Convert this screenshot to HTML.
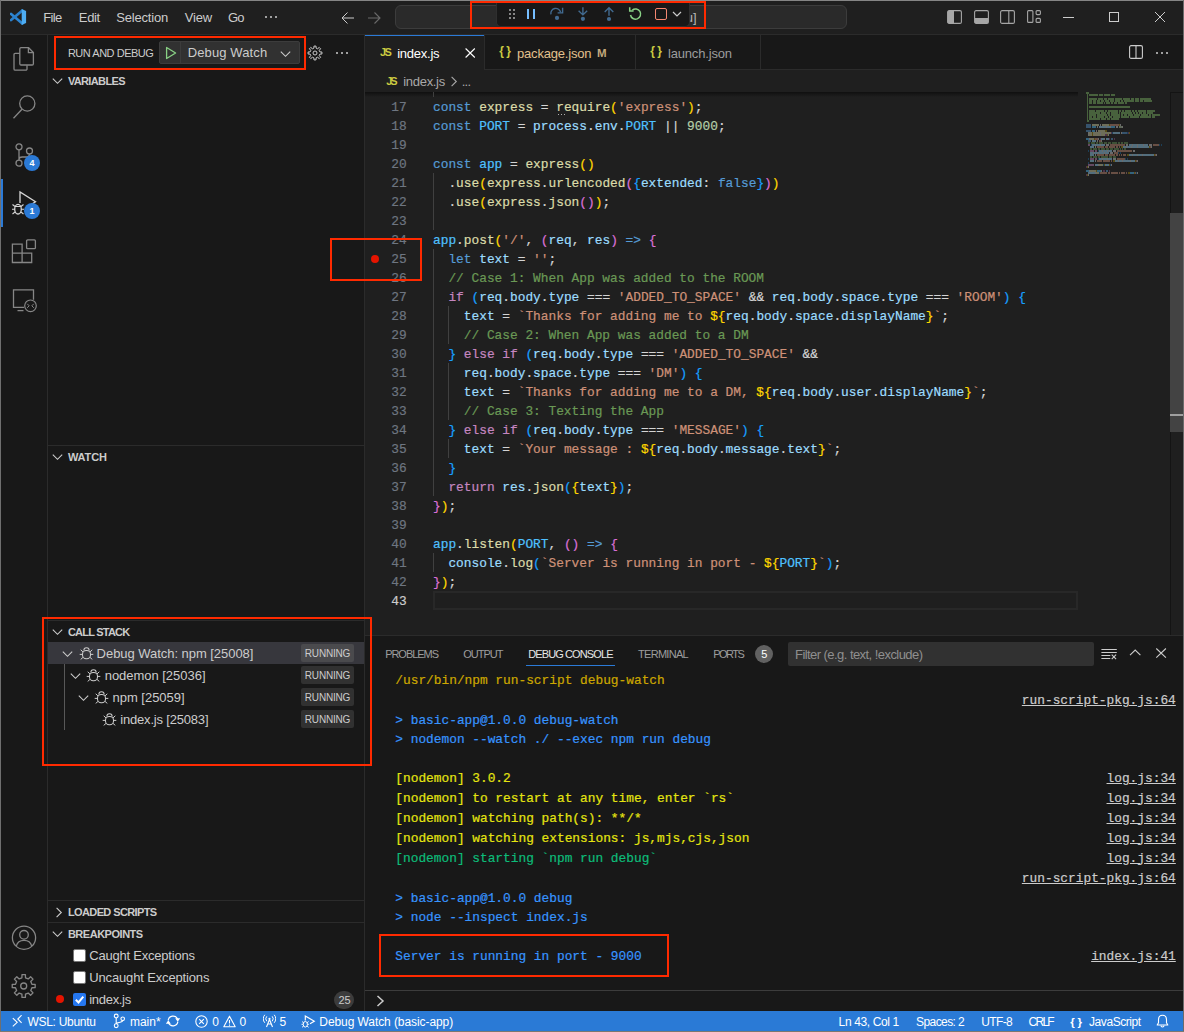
<!DOCTYPE html>
<html><head><meta charset="utf-8"><title>VS Code Debug</title><style>
html,body{margin:0;padding:0;background:#181818;}
#root{position:relative;width:1184px;height:1032px;overflow:hidden;background:#181818;}
.r{position:absolute;display:block}
.t{position:absolute;white-space:pre;display:block}
.s{font-family:"Liberation Sans",sans-serif}
.m{font-family:"Liberation Mono",monospace;-webkit-text-stroke:0.2px currentColor}
</style></head><body><div id="root">
<div class="r" style="left:0px;top:0px;width:1184px;height:1032px;background:#181818;"></div>
<div class="r" style="left:1px;top:1px;width:1182px;height:33px;background:#1f1f1f;"></div>
<div class="r" style="left:1px;top:34px;width:1182px;height:1px;background:#2b2b2b;"></div>
<div class="r" style="left:47px;top:35px;width:1px;height:976px;background:#2b2b2b;"></div>
<div class="r" style="left:364px;top:35px;width:1px;height:976px;background:#2b2b2b;"></div>
<div class="r" style="left:365px;top:70px;width:818px;height:565px;background:#1f1f1f;"></div>
<div class="r" style="left:365px;top:635px;width:818px;height:1px;background:#2b2b2b;"></div>
<div class="r" style="left:1px;top:1011px;width:1182px;height:20px;background:#2a7ad6;"></div>
<svg class="r" style="left:10px;top:9px;" width="17" height="16" viewBox="0 0 17 16" fill="none"><path d="M1.100 4.900 12.300 14.400" stroke="#2d86d3" stroke-width="2.600" stroke-linecap="round"/><path d="M1.100 11.100 12.300 1.600" stroke="#2a7fca" stroke-width="2.600" stroke-linecap="round"/><path d="M11.700 0 16.100 2v12l-4.400 2z" fill="#4dadf3"/></svg>
<span class="t s" style="left:43.3px;top:8.5px;line-height:18px;font-size:13px;color:#cccccc;letter-spacing:-0.682px;">File</span>
<span class="t s" style="left:78.8px;top:8.5px;line-height:18px;font-size:13px;color:#cccccc;letter-spacing:-0.334px;">Edit</span>
<span class="t s" style="left:116.3px;top:8.5px;line-height:18px;font-size:13px;color:#cccccc;letter-spacing:-0.197px;">Selection</span>
<span class="t s" style="left:184.7px;top:8.5px;line-height:18px;font-size:13px;color:#cccccc;letter-spacing:-0.148px;">View</span>
<span class="t s" style="left:228.0px;top:8.5px;line-height:18px;font-size:13px;color:#cccccc;letter-spacing:-0.842px;">Go</span>
<div class="r" style="left:265px;top:16px;width:2px;height:2px;background:#cccccc;border-radius:1px"></div>
<div class="r" style="left:270px;top:16px;width:2px;height:2px;background:#cccccc;border-radius:1px"></div>
<div class="r" style="left:275px;top:16px;width:2px;height:2px;background:#cccccc;border-radius:1px"></div>
<svg class="r" style="left:341px;top:10.5px;" width="14" height="14" viewBox="0 0 14 14" fill="none"><path d="M13 7H1.5M6.5 1.5 1 7l5.5 5.5" stroke="#cccccc" stroke-width="1"/></svg>
<svg class="r" style="left:367px;top:10.5px;" width="14" height="14" viewBox="0 0 14 14" fill="none"><path d="M1 7h11.5M7.5 1.5 13 7l-5.5 5.5" stroke="#6a6a6a" stroke-width="1.1"/></svg>
<div class="r" style="left:395px;top:5px;width:452px;height:24px;background:#2a2a2a;border:1px solid #3c3c3c;border-radius:6px;box-sizing:border-box"></div>
<span class="t s" style="left:685.8px;top:8.5px;line-height:18px;font-size:13px;color:#b8b8b8;">u]</span>
<div class="r" style="left:496px;top:1px;width:193.5px;height:26px;background:#181818;border-radius:0 0 5px 5px;border:1px solid #2f2f2f;border-top:none;box-sizing:border-box"></div>
<div class="r" style="left:508.7px;top:9px;width:2.6px;height:2px;background:#858585;"></div>
<div class="r" style="left:512.9px;top:9px;width:2.6px;height:2px;background:#858585;"></div>
<div class="r" style="left:508.7px;top:13px;width:2.6px;height:2px;background:#858585;"></div>
<div class="r" style="left:512.9px;top:13px;width:2.6px;height:2px;background:#858585;"></div>
<div class="r" style="left:508.7px;top:17px;width:2.6px;height:2px;background:#858585;"></div>
<div class="r" style="left:512.9px;top:17px;width:2.6px;height:2px;background:#858585;"></div>
<div class="r" style="left:527px;top:8.5px;width:2.4px;height:10.7px;background:#75beff;"></div>
<div class="r" style="left:533px;top:8.5px;width:2.4px;height:10.7px;background:#75beff;"></div>
<svg class="r" style="left:548px;top:5px;" width="18" height="18" viewBox="0 0 18 18" fill="none"><path d="M2.900 9.300A4.900 4.900 0 0 1 12.600 7.400" stroke="#426b91" stroke-width="1.400"/><path d="M14.600 2.700v5.200H9.600" stroke="#426b91" stroke-width="1.400"/><circle cx="9" cy="12.900" r="2.100" fill="#426b91"/></svg>
<svg class="r" style="left:574px;top:5px;" width="18" height="18" viewBox="0 0 18 18" fill="none"><path d="M8.900 2.200v7.400M4.600 5.800 8.900 9.900l4.300-4.100" stroke="#426b91" stroke-width="1.400"/><circle cx="8.900" cy="13.800" r="2.100" fill="#426b91"/></svg>
<svg class="r" style="left:600px;top:5px;" width="18" height="18" viewBox="0 0 18 18" fill="none"><path d="M9 10.700V2.800M4.700 6.900 9 2.700l4.300 4.200" stroke="#426b91" stroke-width="1.400"/><circle cx="9" cy="14" r="2.100" fill="#426b91"/></svg>
<svg class="r" style="left:627px;top:5px;" width="18" height="18" viewBox="0 0 18 18" fill="none"><path d="M5.200 5.200A5.100 5.100 0 1 1 3.500 10" stroke="#89d185" stroke-width="1.500"/><path d="M2.700 2.200v3.900h3.900" stroke="#89d185" stroke-width="1.500"/></svg>
<div class="r" style="left:654.8px;top:7.6px;width:12.4px;height:12.2px;background:transparent;border:1.400px solid #f48771;border-radius:2px;box-sizing:border-box"></div>
<svg class="r" style="left:672px;top:11px;" width="10" height="6" viewBox="0 0 10 6" fill="none"><path d="M1 1l4 4 4-4" stroke="#cccccc" stroke-width="1.200"/></svg>
<div class="r" style="left:470px;top:1px;width:236px;height:28px;background:transparent;border:2px solid #ff2a00;box-sizing:border-box"></div>
<svg class="r" style="left:947px;top:10px;" width="15" height="14" viewBox="0 0 15 14" fill="none"><rect x=".6" y=".6" width="13.8" height="12.8" rx="1.5" stroke="#a6a6a6" stroke-width="1.1"/><path d="M1 1h6v12H1z" fill="#a6a6a6"/></svg>
<svg class="r" style="left:974px;top:10px;" width="15" height="14" viewBox="0 0 15 14" fill="none"><rect x=".6" y=".6" width="13.8" height="12.8" rx="1.5" stroke="#a6a6a6" stroke-width="1.1"/><path d="M1 8h13v5H1z" fill="#a6a6a6"/></svg>
<svg class="r" style="left:1000px;top:10px;" width="15" height="14" viewBox="0 0 15 14" fill="none"><rect x=".6" y=".6" width="13.8" height="12.8" rx="1.5" stroke="#a6a6a6" stroke-width="1.1"/><path d="M8.800 1v12" stroke="#a6a6a6" stroke-width="1.1"/></svg>
<svg class="r" style="left:1027px;top:10px;" width="14" height="14" viewBox="0 0 14 14" fill="none"><rect x=".6" y=".6" width="5.3" height="11.8" rx="1" stroke="#a6a6a6" stroke-width="1.1"/><rect x="9.1" y=".6" width="4.3" height="4" rx="1" stroke="#a6a6a6" stroke-width="1.1"/><rect x="9.1" y="8.4" width="4.3" height="4" rx="1" stroke="#a6a6a6" stroke-width="1.1"/></svg>
<div class="r" style="left:1063px;top:17px;width:11px;height:1px;background:#cccccc;"></div>
<div class="r" style="left:1109px;top:12px;width:10px;height:10px;background:transparent;border:1px solid #cccccc;box-sizing:border-box"></div>
<svg class="r" style="left:1154px;top:11px;" width="12" height="12" viewBox="0 0 12 12" fill="none"><path d="M1 1l10 10M11 1 1 11" stroke="#cccccc" stroke-width="1"/></svg>
<svg class="r" style="left:12px;top:46px;" width="24" height="26" viewBox="0 0 24 26" fill="none"><path d="M9 1.700h7.600l4.800 4.800v11.300a1.200 1.200 0 0 1-1.200 1.200H9a1.200 1.200 0 0 1-1.200-1.200V2.900A1.200 1.200 0 0 1 9 1.700z" stroke="#868686" stroke-width="1.300"/><path d="M16.400 1.900v4.800h4.800" stroke="#868686" stroke-width="1.300"/><path d="M7.800 7.300H3.200A1.200 1.200 0 0 0 2 8.500v14.400a1.200 1.200 0 0 0 1.200 1.200h10.600a1.200 1.200 0 0 0 1.200-1.200v-3.700" stroke="#868686" stroke-width="1.300"/></svg>
<svg class="r" style="left:12px;top:94px;" width="26" height="26" viewBox="0 0 26 26" fill="none"><circle cx="15.3" cy="9.500" r="7.600" stroke="#868686" stroke-width="1.3"/><path d="M10 15.200 1.500 24.300" stroke="#868686" stroke-width="1.3"/></svg>
<svg class="r" style="left:14px;top:142px;" width="22" height="26" viewBox="0 0 22 26" fill="none"><circle cx="5" cy="4.800" r="3" stroke="#868686" stroke-width="1.3"/><circle cx="5" cy="21.200" r="3" stroke="#868686" stroke-width="1.3"/><circle cx="15.500" cy="9" r="3" stroke="#868686" stroke-width="1.3"/><path d="M5 7.800v10.400M15.500 12c0 2.200-1.500 3-3.500 3H8.200c-2 0-3.200 1-3.200 2.800" stroke="#868686" stroke-width="1.3"/></svg>
<div class="r" style="left:24px;top:155px;width:16px;height:16px;background:#2b7ad6;border-radius:8px"></div>
<span class="t s" style="left:29.4px;top:156.7px;line-height:13px;font-size:9px;color:#ffffff;font-weight:bold;">4</span>
<div class="r" style="left:1px;top:179px;width:2px;height:48px;background:#2b7ad6;"></div>
<svg class="r" style="left:10px;top:188px;" width="28" height="30" viewBox="0 0 28 30" fill="none"><path d="M10 15V4l15.500 9.800-6 3.800" stroke="#d7d7d7" stroke-width="1.3"/><ellipse cx="8" cy="21.200" rx="3.300" ry="4.800" stroke="#d7d7d7" stroke-width="1.300"/><path d="M5 18.500h6M2 21.300h2.700M11.300 21.300H14M2.500 16.500l2.500 2M13.500 16.500l-2.500 2M2.500 26l2.500-2M13.500 26l-2.500-2" stroke="#d7d7d7" stroke-width="1.100"/></svg>
<div class="r" style="left:24px;top:203px;width:16px;height:16px;background:#2b7ad6;border-radius:8px"></div>
<span class="t s" style="left:29.4px;top:204.7px;line-height:13px;font-size:9px;color:#ffffff;font-weight:bold;">1</span>
<svg class="r" style="left:11px;top:238px;" width="26" height="26" viewBox="0 0 26 26" fill="none"><path d="M1.400 6.200h9.700v9h9.600v9.300H1.400zM1.400 15.200h9.700v9.300" stroke="#868686" stroke-width="1.300"/><rect x="15.600" y="1.900" width="8.800" height="8.800" rx="1" stroke="#868686" stroke-width="1.300"/></svg>
<svg class="r" style="left:11px;top:288px;" width="28" height="26" viewBox="0 0 28 26" fill="none"><path d="M13 19.300H2.500V1.800h20v10" stroke="#868686" stroke-width="1.300"/><path d="M6.500 22.600h6" stroke="#868686" stroke-width="1.300"/><circle cx="19.500" cy="17.800" r="5.800" stroke="#868686" stroke-width="1.200"/><path d="M16.200 15.800l2 2-2 2M22.800 15.800l-2 2 2 2" stroke="#868686" stroke-width="1"/></svg>
<svg class="r" style="left:11px;top:925px;" width="26" height="26" viewBox="0 0 26 26" fill="none"><circle cx="13" cy="12.700" r="11.600" stroke="#868686" stroke-width="1.300"/><circle cx="13" cy="9.800" r="4.300" stroke="#868686" stroke-width="1.300"/><path d="M5.300 21.200c1-4.200 4-5.800 7.700-5.800s6.700 1.600 7.700 5.800" stroke="#868686" stroke-width="1.300"/></svg>
<svg class="r" style="left:10px;top:972px;" width="28" height="28" viewBox="0 0 28 28" fill="none"><path d="M11.93 5.79 L11.98 2.53 L15.42 2.53 L15.47 5.79 L18.26 6.94 L20.59 4.67 L23.03 7.11 L20.76 9.44 L21.91 12.23 L25.17 12.28 L25.17 15.72 L21.91 15.77 L20.76 18.56 L23.03 20.89 L20.59 23.33 L18.26 21.06 L15.47 22.21 L15.42 25.47 L11.98 25.47 L11.93 22.21 L9.14 21.06 L6.81 23.33 L4.37 20.89 L6.64 18.56 L5.49 15.77 L2.23 15.72 L2.23 12.28 L5.49 12.23 L6.64 9.44 L4.37 7.11 L6.81 4.67 L9.14 6.94Z" stroke="#868686" stroke-width="1.3" stroke-linejoin="round"/><circle cx="13.7" cy="14" r="3" stroke="#868686" stroke-width="1.3"/></svg>
<span class="t s" style="left:67.9px;top:45.5px;line-height:15px;font-size:11px;color:#cccccc;letter-spacing:-0.473px;">RUN AND DEBUG</span>
<div class="r" style="left:159px;top:41px;width:141px;height:23px;background:#313131;border:1px solid #3c3c3c;border-radius:2px;box-sizing:border-box"></div>
<div class="r" style="left:180px;top:42px;width:1px;height:21px;background:#3c3c3c;"></div>
<svg class="r" style="left:164px;top:46px;" width="14" height="14" viewBox="0 0 14 14" fill="none"><path d="M2.600 1.500v11l9-5.500z" stroke="#89d185" stroke-width="1.300" stroke-linejoin="round"/></svg>
<span class="t s" style="left:187.7px;top:44.0px;line-height:18px;font-size:13px;color:#cccccc;letter-spacing:0.122px;">Debug Watch</span>
<svg class="r" style="left:279.5px;top:49.5px;" width="11" height="8" viewBox="0 0 11 8" fill="none"><path d="M.8 1.600 5.500 6.300 10.200 1.600" stroke="#cccccc" stroke-width="1.100"/></svg>
<svg class="r" style="left:307px;top:45px;" width="16" height="16" viewBox="0 0 16 16" fill="none"><path d="M6.95 3.11 L6.96 1.08 L9.04 1.08 L9.05 3.11 L10.71 3.80 L12.16 2.37 L13.63 3.84 L12.20 5.29 L12.89 6.95 L14.92 6.96 L14.92 9.04 L12.89 9.05 L12.20 10.71 L13.63 12.16 L12.16 13.63 L10.71 12.20 L9.05 12.89 L9.04 14.92 L6.96 14.92 L6.95 12.89 L5.29 12.20 L3.84 13.63 L2.37 12.16 L3.80 10.71 L3.11 9.05 L1.08 9.04 L1.08 6.96 L3.11 6.95 L3.80 5.29 L2.37 3.84 L3.84 2.37 L5.29 3.80Z" stroke="#cccccc" stroke-width="1" stroke-linejoin="round"/><circle cx="8" cy="8" r="2" stroke="#cccccc" stroke-width="1"/></svg>
<div class="r" style="left:335.5px;top:52px;width:2px;height:2px;background:#cccccc;border-radius:1px"></div>
<div class="r" style="left:340.5px;top:52px;width:2px;height:2px;background:#cccccc;border-radius:1px"></div>
<div class="r" style="left:345.5px;top:52px;width:2px;height:2px;background:#cccccc;border-radius:1px"></div>
<div class="r" style="left:54px;top:36px;width:252px;height:34px;background:transparent;border:2px solid #ff2a00;box-sizing:border-box"></div>
<svg class="r" style="left:52.4px;top:77.3px;" width="11" height="8" viewBox="0 0 11 8" fill="none"><path d="M.8 1.600 5.500 6.300 10.200 1.600" stroke="#cccccc" stroke-width="1.100"/></svg>
<span class="t s" style="left:67.9px;top:73.5px;line-height:15px;font-size:11px;color:#cccccc;font-weight:bold;letter-spacing:-0.643px;">VARIABLES</span>
<div class="r" style="left:48px;top:445px;width:316px;height:1px;background:#2b2b2b;"></div>
<svg class="r" style="left:52.4px;top:453.3px;" width="11" height="8" viewBox="0 0 11 8" fill="none"><path d="M.8 1.600 5.500 6.300 10.200 1.600" stroke="#cccccc" stroke-width="1.100"/></svg>
<span class="t s" style="left:67.9px;top:449.5px;line-height:15px;font-size:11px;color:#cccccc;font-weight:bold;letter-spacing:-0.102px;">WATCH</span>
<div class="r" style="left:48px;top:620px;width:316px;height:1px;background:#2b2b2b;"></div>
<svg class="r" style="left:52.4px;top:628.3px;" width="11" height="8" viewBox="0 0 11 8" fill="none"><path d="M.8 1.600 5.500 6.300 10.200 1.600" stroke="#cccccc" stroke-width="1.100"/></svg>
<span class="t s" style="left:67.9px;top:624.5px;line-height:15px;font-size:11px;color:#cccccc;font-weight:bold;letter-spacing:-0.773px;">CALL STACK</span>
<div class="r" style="left:48px;top:642px;width:316px;height:22px;background:#37373d;"></div>
<svg class="r" style="left:62px;top:649.5px;" width="11" height="8" viewBox="0 0 11 8" fill="none"><path d="M.8 1.600 5.500 6.300 10.200 1.600" stroke="#cccccc" stroke-width="1.100"/></svg>
<svg class="r" style="left:78.5px;top:645.7px;" width="15" height="15" viewBox="0 0 15 15" fill="none"><path d="M4.800 4.600a2.700 2.900 0 0 1 5.400 0" stroke="#cccccc" stroke-width="1.050"/><rect x="3.500" y="4.500" width="8" height="8.300" rx="3.700" stroke="#cccccc" stroke-width="1.050"/><path d="M3.500 8.400H.7M14.300 8.400h-2.800M4 5.900 1.700 3.800M11 5.900l2.300-2.100M4.100 11.300l-2.400 2.100M10.900 11.300l2.400 2.100" stroke="#cccccc" stroke-width="1"/></svg>
<span class="t s" style="left:96.6px;top:644.7px;line-height:18px;font-size:13px;color:#cccccc;letter-spacing:-0.043px;">Debug Watch: npm [25008]</span>
<div class="r" style="left:301px;top:644px;width:53px;height:18px;background:#4a4a4d;border-radius:2px"></div>
<span class="t s" style="left:304.8px;top:646.9px;line-height:14px;font-size:10px;color:#cccccc;letter-spacing:-0.178px;">RUNNING</span>
<div class="r" style="left:64px;top:664px;width:1px;height:66px;background:#585858;"></div>
<svg class="r" style="left:70px;top:671.5px;" width="11" height="8" viewBox="0 0 11 8" fill="none"><path d="M.8 1.600 5.500 6.300 10.200 1.600" stroke="#cccccc" stroke-width="1.100"/></svg>
<svg class="r" style="left:86.0px;top:667.7px;" width="15" height="15" viewBox="0 0 15 15" fill="none"><path d="M4.800 4.600a2.700 2.900 0 0 1 5.400 0" stroke="#cccccc" stroke-width="1.050"/><rect x="3.500" y="4.500" width="8" height="8.300" rx="3.700" stroke="#cccccc" stroke-width="1.050"/><path d="M3.500 8.400H.7M14.300 8.400h-2.800M4 5.900 1.700 3.800M11 5.900l2.300-2.100M4.100 11.300l-2.400 2.100M10.900 11.300l2.400 2.100" stroke="#cccccc" stroke-width="1"/></svg>
<span class="t s" style="left:104.7px;top:666.7px;line-height:18px;font-size:13px;color:#cccccc;letter-spacing:-0.028px;">nodemon [25036]</span>
<div class="r" style="left:301px;top:666px;width:53px;height:18px;background:#313131;border-radius:2px"></div>
<span class="t s" style="left:304.8px;top:668.9px;line-height:14px;font-size:10px;color:#cccccc;letter-spacing:-0.178px;">RUNNING</span>
<svg class="r" style="left:77.5px;top:693.5px;" width="11" height="8" viewBox="0 0 11 8" fill="none"><path d="M.8 1.600 5.500 6.300 10.200 1.600" stroke="#cccccc" stroke-width="1.100"/></svg>
<svg class="r" style="left:94.0px;top:689.7px;" width="15" height="15" viewBox="0 0 15 15" fill="none"><path d="M4.800 4.600a2.700 2.900 0 0 1 5.400 0" stroke="#cccccc" stroke-width="1.050"/><rect x="3.500" y="4.500" width="8" height="8.300" rx="3.700" stroke="#cccccc" stroke-width="1.050"/><path d="M3.500 8.400H.7M14.300 8.400h-2.800M4 5.900 1.700 3.800M11 5.900l2.300-2.100M4.100 11.300l-2.400 2.100M10.900 11.300l2.400 2.100" stroke="#cccccc" stroke-width="1"/></svg>
<span class="t s" style="left:112.5px;top:688.7px;line-height:18px;font-size:13px;color:#cccccc;letter-spacing:-0.017px;">npm [25059]</span>
<div class="r" style="left:301px;top:688px;width:53px;height:18px;background:#313131;border-radius:2px"></div>
<span class="t s" style="left:304.8px;top:690.9px;line-height:14px;font-size:10px;color:#cccccc;letter-spacing:-0.178px;">RUNNING</span>
<svg class="r" style="left:102.0px;top:711.7px;" width="15" height="15" viewBox="0 0 15 15" fill="none"><path d="M4.800 4.600a2.700 2.900 0 0 1 5.400 0" stroke="#cccccc" stroke-width="1.050"/><rect x="3.500" y="4.500" width="8" height="8.300" rx="3.700" stroke="#cccccc" stroke-width="1.050"/><path d="M3.500 8.400H.7M14.300 8.400h-2.800M4 5.900 1.700 3.800M11 5.900l2.300-2.100M4.100 11.300l-2.400 2.100M10.900 11.300l2.400 2.100" stroke="#cccccc" stroke-width="1"/></svg>
<span class="t s" style="left:120.3px;top:710.7px;line-height:18px;font-size:13px;color:#cccccc;letter-spacing:-0.191px;">index.js [25083]</span>
<div class="r" style="left:301px;top:710px;width:53px;height:18px;background:#313131;border-radius:2px"></div>
<span class="t s" style="left:304.8px;top:712.9px;line-height:14px;font-size:10px;color:#cccccc;letter-spacing:-0.178px;">RUNNING</span>
<div class="r" style="left:42px;top:617px;width:330px;height:149px;background:transparent;border:2px solid #ff2a00;box-sizing:border-box"></div>
<div class="r" style="left:48px;top:900px;width:316px;height:1px;background:#2b2b2b;"></div>
<svg class="r" style="left:55px;top:906.5px;" width="8" height="11" viewBox="0 0 8 11" fill="none"><path d="M1.600.8 6.300 5.500 1.600 10.200" stroke="#cccccc" stroke-width="1.100"/></svg>
<span class="t s" style="left:67.9px;top:904.5px;line-height:15px;font-size:11px;color:#cccccc;font-weight:bold;letter-spacing:-0.606px;">LOADED SCRIPTS</span>
<div class="r" style="left:48px;top:922px;width:316px;height:1px;background:#2b2b2b;"></div>
<svg class="r" style="left:52.4px;top:930.3px;" width="11" height="8" viewBox="0 0 11 8" fill="none"><path d="M.8 1.600 5.500 6.300 10.200 1.600" stroke="#cccccc" stroke-width="1.100"/></svg>
<span class="t s" style="left:67.9px;top:926.5px;line-height:15px;font-size:11px;color:#cccccc;font-weight:bold;letter-spacing:-0.476px;">BREAKPOINTS</span>
<div class="r" style="left:73px;top:949.0px;width:13px;height:13px;background:#ffffff;border-radius:2px;border:1px solid #767676;box-sizing:border-box"></div>
<span class="t s" style="left:89.3px;top:946.5px;line-height:18px;font-size:13px;color:#cccccc;letter-spacing:-0.220px;">Caught Exceptions</span>
<div class="r" style="left:73px;top:971.0px;width:13px;height:13px;background:#ffffff;border-radius:2px;border:1px solid #767676;box-sizing:border-box"></div>
<span class="t s" style="left:89.3px;top:968.5px;line-height:18px;font-size:13px;color:#cccccc;letter-spacing:-0.153px;">Uncaught Exceptions</span>
<div class="r" style="left:55.5px;top:995.1px;width:8.4px;height:8.4px;background:#e51400;border-radius:50%"></div>
<div class="r" style="left:73px;top:993.0px;width:13px;height:13px;background:#2577f0;border-radius:2px"></div>
<svg class="r" style="left:73px;top:993.0px;" width="13" height="13" viewBox="0 0 13 13" fill="none"><path d="M2.800 6.800 5.500 9.500 10.300 3.600" stroke="#ffffff" stroke-width="2"/></svg>
<span class="t s" style="left:89.3px;top:990.5px;line-height:18px;font-size:13px;color:#cccccc;letter-spacing:-0.311px;">index.js</span>
<div class="r" style="left:334px;top:991px;width:20px;height:18px;background:#3c3c3c;border-radius:9px"></div>
<span class="t s" style="left:338.5px;top:992.5px;line-height:15px;font-size:11px;color:#cccccc;letter-spacing:-0.235px;">25</span>
<div class="r" style="left:365px;top:35px;width:818px;height:34px;background:#181818;"></div>
<div class="r" style="left:365px;top:69px;width:818px;height:1px;background:#2b2b2b;"></div>
<div class="r" style="left:365px;top:35px;width:119px;height:35px;background:#1f1f1f;"></div>
<div class="r" style="left:365px;top:35px;width:119px;height:1px;background:#2b7ad6;"></div>
<div class="r" style="left:484px;top:35px;width:1px;height:34px;background:#2b2b2b;"></div>
<div class="r" style="left:635px;top:35px;width:1px;height:34px;background:#2b2b2b;"></div>
<div class="r" style="left:760px;top:35px;width:1px;height:34px;background:#2b2b2b;"></div>
<span class="t s" style="left:379.9px;top:44.9px;line-height:15px;font-size:11px;color:#cbcb41;font-weight:bold;letter-spacing:-1.555px;">JS</span>
<span class="t s" style="left:397.2px;top:44.7px;line-height:18px;font-size:13px;color:#ffffff;letter-spacing:-0.240px;">index.js</span>
<svg class="r" style="left:465px;top:48px;" width="11" height="11" viewBox="0 0 11 11" fill="none"><path d="M.600.500l9.200 9M9.800.500.600 9.500" stroke="#ffffff" stroke-width="1.100"/></svg>
<span class="t s" style="left:499.2px;top:43.0px;line-height:17px;font-size:12px;color:#cbcb41;font-weight:bold;letter-spacing:2.460px;">{}</span>
<span class="t s" style="left:517.0px;top:44.7px;line-height:18px;font-size:13px;color:#e2c08d;letter-spacing:-0.192px;">package.json</span>
<span class="t s" style="left:596.9px;top:45.4px;line-height:16px;font-size:11.5px;color:#c4a97c;font-weight:bold;">M</span>
<span class="t s" style="left:650.2px;top:43.0px;line-height:17px;font-size:12px;color:#cbcb41;font-weight:bold;letter-spacing:2.460px;">{}</span>
<span class="t s" style="left:668.0px;top:44.7px;line-height:18px;font-size:13px;color:#9d9d9d;letter-spacing:-0.177px;">launch.json</span>
<svg class="r" style="left:1129px;top:45.3px;" width="14" height="14" viewBox="0 0 14 14" fill="none"><rect x=".600" y=".600" width="12.800" height="12.800" rx="1.500" stroke="#cccccc" stroke-width="1.100"/><path d="M7 1v12" stroke="#cccccc" stroke-width="1.100"/></svg>
<div class="r" style="left:1155.5px;top:51.7px;width:2px;height:2px;background:#cccccc;border-radius:1px"></div>
<div class="r" style="left:1160.5px;top:51.7px;width:2px;height:2px;background:#cccccc;border-radius:1px"></div>
<div class="r" style="left:1165.5px;top:51.7px;width:2px;height:2px;background:#cccccc;border-radius:1px"></div>
<span class="t s" style="left:386.2px;top:73.8px;line-height:15px;font-size:11px;color:#cbcb41;font-weight:bold;letter-spacing:-2.055px;">JS</span>
<span class="t s" style="left:403.3px;top:73.0px;line-height:18px;font-size:13px;color:#a9a9a9;letter-spacing:-0.311px;">index.js</span>
<svg class="r" style="left:450px;top:76px;" width="8" height="11" viewBox="0 0 8 11" fill="none"><path d="M1.600.8 6.300 5.500 1.600 10.200" stroke="#a9a9a9" stroke-width="1.100"/></svg>
<span class="t s" style="left:461.8px;top:73.0px;line-height:18px;font-size:13px;color:#a9a9a9;letter-spacing:-0.818px;">...</span>
<div class="r" style="left:365px;top:92px;width:713px;height:5px;background:linear-gradient(rgba(0,0,0,.5),rgba(0,0,0,0));"></div>
<div class="r" style="left:433px;top:591px;width:645px;height:19px;background:transparent;border:2px solid #282828;box-sizing:border-box"></div>
<div class="r" style="left:433px;top:92px;width:1px;height:5px;background:#404040;"></div>
<div class="r" style="left:433px;top:173px;width:1px;height:57px;background:#404040;"></div>
<div class="r" style="left:433px;top:249px;width:1px;height:247px;background:#404040;"></div>
<div class="r" style="left:433px;top:553px;width:1px;height:19px;background:#404040;"></div>
<div class="r" style="left:448px;top:306px;width:1px;height:38px;background:#404040;"></div>
<div class="r" style="left:448px;top:363px;width:1px;height:57px;background:#404040;"></div>
<div class="r" style="left:448px;top:439px;width:1px;height:19px;background:#404040;"></div>
<div class="r" style="left:370.5px;top:254.8px;width:8.6px;height:8.6px;background:#e51400;border-radius:50%"></div>
<span class="t m" style="left:391.200px;top:98px;line-height:19px;font-size:12.83px;color:#6e7681;letter-spacing:0">17</span>
<span class="t m" style="left:433px;top:98px;line-height:19px;font-size:12.83px;"><span style="color:#569cd6">const </span><span style="color:#dcdcaa">express</span><span style="color:#d4d4d4"> = </span><span style="color:#dcdcaa">require</span><span style="color:#ffd700">(</span><span style="color:#ce9178">'express'</span><span style="color:#ffd700">)</span><span style="color:#d4d4d4">;</span></span>
<span class="t m" style="left:391.200px;top:117px;line-height:19px;font-size:12.83px;color:#6e7681;letter-spacing:0">18</span>
<span class="t m" style="left:433px;top:117px;line-height:19px;font-size:12.83px;"><span style="color:#569cd6">const </span><span style="color:#4fc1ff">PORT</span><span style="color:#d4d4d4"> = </span><span style="color:#9cdcfe">process</span><span style="color:#d4d4d4">.</span><span style="color:#9cdcfe">env</span><span style="color:#d4d4d4">.</span><span style="color:#4fc1ff">PORT</span><span style="color:#d4d4d4"> || </span><span style="color:#b5cea8">9000</span><span style="color:#d4d4d4">;</span></span>
<span class="t m" style="left:391.200px;top:136px;line-height:19px;font-size:12.83px;color:#6e7681;letter-spacing:0">19</span>
<span class="t m" style="left:391.200px;top:155px;line-height:19px;font-size:12.83px;color:#6e7681;letter-spacing:0">20</span>
<span class="t m" style="left:433px;top:155px;line-height:19px;font-size:12.83px;"><span style="color:#569cd6">const </span><span style="color:#4fc1ff">app</span><span style="color:#d4d4d4"> = </span><span style="color:#dcdcaa">express</span><span style="color:#ffd700">()</span></span>
<span class="t m" style="left:391.200px;top:174px;line-height:19px;font-size:12.83px;color:#6e7681;letter-spacing:0">21</span>
<span class="t m" style="left:433px;top:174px;line-height:19px;font-size:12.83px;"><span style="color:#d4d4d4">  .</span><span style="color:#dcdcaa">use</span><span style="color:#ffd700">(</span><span style="color:#dcdcaa">express</span><span style="color:#d4d4d4">.</span><span style="color:#dcdcaa">urlencoded</span><span style="color:#da70d6">(</span><span style="color:#179fff">{</span><span style="color:#9cdcfe">extended</span><span style="color:#d4d4d4">: </span><span style="color:#569cd6">false</span><span style="color:#179fff">}</span><span style="color:#da70d6">)</span><span style="color:#ffd700">)</span></span>
<span class="t m" style="left:391.200px;top:193px;line-height:19px;font-size:12.83px;color:#6e7681;letter-spacing:0">22</span>
<span class="t m" style="left:433px;top:193px;line-height:19px;font-size:12.83px;"><span style="color:#d4d4d4">  .</span><span style="color:#dcdcaa">use</span><span style="color:#ffd700">(</span><span style="color:#dcdcaa">express</span><span style="color:#d4d4d4">.</span><span style="color:#dcdcaa">json</span><span style="color:#da70d6">()</span><span style="color:#ffd700">)</span><span style="color:#d4d4d4">;</span></span>
<span class="t m" style="left:391.200px;top:212px;line-height:19px;font-size:12.83px;color:#6e7681;letter-spacing:0">23</span>
<span class="t m" style="left:391.200px;top:231px;line-height:19px;font-size:12.83px;color:#6e7681;letter-spacing:0">24</span>
<span class="t m" style="left:433px;top:231px;line-height:19px;font-size:12.83px;"><span style="color:#4fc1ff">app</span><span style="color:#d4d4d4">.</span><span style="color:#dcdcaa">post</span><span style="color:#ffd700">(</span><span style="color:#ce9178">'/'</span><span style="color:#d4d4d4">, </span><span style="color:#da70d6">(</span><span style="color:#9cdcfe">req</span><span style="color:#d4d4d4">, </span><span style="color:#9cdcfe">res</span><span style="color:#da70d6">)</span><span style="color:#569cd6"> =&gt; </span><span style="color:#da70d6">{</span></span>
<span class="t m" style="left:391.200px;top:250px;line-height:19px;font-size:12.83px;color:#6e7681;letter-spacing:0">25</span>
<span class="t m" style="left:433px;top:250px;line-height:19px;font-size:12.83px;"><span style="color:#569cd6">  let </span><span style="color:#9cdcfe">text</span><span style="color:#d4d4d4"> = </span><span style="color:#ce9178">''</span><span style="color:#d4d4d4">;</span></span>
<span class="t m" style="left:391.200px;top:269px;line-height:19px;font-size:12.83px;color:#6e7681;letter-spacing:0">26</span>
<span class="t m" style="left:433px;top:269px;line-height:19px;font-size:12.83px;"><span style="color:#6a9955">  // Case 1: When App was added to the ROOM</span></span>
<span class="t m" style="left:391.200px;top:288px;line-height:19px;font-size:12.83px;color:#6e7681;letter-spacing:0">27</span>
<span class="t m" style="left:433px;top:288px;line-height:19px;font-size:12.83px;"><span style="color:#c586c0">  if </span><span style="color:#179fff">(</span><span style="color:#9cdcfe">req</span><span style="color:#d4d4d4">.</span><span style="color:#9cdcfe">body</span><span style="color:#d4d4d4">.</span><span style="color:#9cdcfe">type</span><span style="color:#d4d4d4"> === </span><span style="color:#ce9178">'ADDED_TO_SPACE'</span><span style="color:#d4d4d4"> &amp;&amp; </span><span style="color:#9cdcfe">req</span><span style="color:#d4d4d4">.</span><span style="color:#9cdcfe">body</span><span style="color:#d4d4d4">.</span><span style="color:#9cdcfe">space</span><span style="color:#d4d4d4">.</span><span style="color:#9cdcfe">type</span><span style="color:#d4d4d4"> === </span><span style="color:#ce9178">'ROOM'</span><span style="color:#179fff">)</span><span style="color:#d4d4d4"> </span><span style="color:#179fff">{</span></span>
<span class="t m" style="left:391.200px;top:307px;line-height:19px;font-size:12.83px;color:#6e7681;letter-spacing:0">28</span>
<span class="t m" style="left:433px;top:307px;line-height:19px;font-size:12.83px;"><span style="color:#9cdcfe">    text</span><span style="color:#d4d4d4"> = </span><span style="color:#ce9178">`Thanks for adding me to </span><span style="color:#ffd700">${</span><span style="color:#9cdcfe">req</span><span style="color:#d4d4d4">.</span><span style="color:#9cdcfe">body</span><span style="color:#d4d4d4">.</span><span style="color:#9cdcfe">space</span><span style="color:#d4d4d4">.</span><span style="color:#9cdcfe">displayName</span><span style="color:#ffd700">}</span><span style="color:#ce9178">`</span><span style="color:#d4d4d4">;</span></span>
<span class="t m" style="left:391.200px;top:326px;line-height:19px;font-size:12.83px;color:#6e7681;letter-spacing:0">29</span>
<span class="t m" style="left:433px;top:326px;line-height:19px;font-size:12.83px;"><span style="color:#6a9955">    // Case 2: When App was added to a DM</span></span>
<span class="t m" style="left:391.200px;top:345px;line-height:19px;font-size:12.83px;color:#6e7681;letter-spacing:0">30</span>
<span class="t m" style="left:433px;top:345px;line-height:19px;font-size:12.83px;"><span style="color:#179fff">  }</span><span style="color:#c586c0"> else if </span><span style="color:#179fff">(</span><span style="color:#9cdcfe">req</span><span style="color:#d4d4d4">.</span><span style="color:#9cdcfe">body</span><span style="color:#d4d4d4">.</span><span style="color:#9cdcfe">type</span><span style="color:#d4d4d4"> === </span><span style="color:#ce9178">'ADDED_TO_SPACE'</span><span style="color:#d4d4d4"> &amp;&amp;</span></span>
<span class="t m" style="left:391.200px;top:364px;line-height:19px;font-size:12.83px;color:#6e7681;letter-spacing:0">31</span>
<span class="t m" style="left:433px;top:364px;line-height:19px;font-size:12.83px;"><span style="color:#9cdcfe">    req</span><span style="color:#d4d4d4">.</span><span style="color:#9cdcfe">body</span><span style="color:#d4d4d4">.</span><span style="color:#9cdcfe">space</span><span style="color:#d4d4d4">.</span><span style="color:#9cdcfe">type</span><span style="color:#d4d4d4"> === </span><span style="color:#ce9178">'DM'</span><span style="color:#179fff">)</span><span style="color:#d4d4d4"> </span><span style="color:#179fff">{</span></span>
<span class="t m" style="left:391.200px;top:383px;line-height:19px;font-size:12.83px;color:#6e7681;letter-spacing:0">32</span>
<span class="t m" style="left:433px;top:383px;line-height:19px;font-size:12.83px;"><span style="color:#9cdcfe">    text</span><span style="color:#d4d4d4"> = </span><span style="color:#ce9178">`Thanks for adding me to a DM, </span><span style="color:#ffd700">${</span><span style="color:#9cdcfe">req</span><span style="color:#d4d4d4">.</span><span style="color:#9cdcfe">body</span><span style="color:#d4d4d4">.</span><span style="color:#9cdcfe">user</span><span style="color:#d4d4d4">.</span><span style="color:#9cdcfe">displayName</span><span style="color:#ffd700">}</span><span style="color:#ce9178">`</span><span style="color:#d4d4d4">;</span></span>
<span class="t m" style="left:391.200px;top:402px;line-height:19px;font-size:12.83px;color:#6e7681;letter-spacing:0">33</span>
<span class="t m" style="left:433px;top:402px;line-height:19px;font-size:12.83px;"><span style="color:#6a9955">    // Case 3: Texting the App</span></span>
<span class="t m" style="left:391.200px;top:421px;line-height:19px;font-size:12.83px;color:#6e7681;letter-spacing:0">34</span>
<span class="t m" style="left:433px;top:421px;line-height:19px;font-size:12.83px;"><span style="color:#179fff">  }</span><span style="color:#c586c0"> else if </span><span style="color:#179fff">(</span><span style="color:#9cdcfe">req</span><span style="color:#d4d4d4">.</span><span style="color:#9cdcfe">body</span><span style="color:#d4d4d4">.</span><span style="color:#9cdcfe">type</span><span style="color:#d4d4d4"> === </span><span style="color:#ce9178">'MESSAGE'</span><span style="color:#179fff">)</span><span style="color:#d4d4d4"> </span><span style="color:#179fff">{</span></span>
<span class="t m" style="left:391.200px;top:440px;line-height:19px;font-size:12.83px;color:#6e7681;letter-spacing:0">35</span>
<span class="t m" style="left:433px;top:440px;line-height:19px;font-size:12.83px;"><span style="color:#9cdcfe">    text</span><span style="color:#d4d4d4"> = </span><span style="color:#ce9178">`Your message : </span><span style="color:#ffd700">${</span><span style="color:#9cdcfe">req</span><span style="color:#d4d4d4">.</span><span style="color:#9cdcfe">body</span><span style="color:#d4d4d4">.</span><span style="color:#9cdcfe">message</span><span style="color:#d4d4d4">.</span><span style="color:#9cdcfe">text</span><span style="color:#ffd700">}</span><span style="color:#ce9178">`</span><span style="color:#d4d4d4">;</span></span>
<span class="t m" style="left:391.200px;top:459px;line-height:19px;font-size:12.83px;color:#6e7681;letter-spacing:0">36</span>
<span class="t m" style="left:433px;top:459px;line-height:19px;font-size:12.83px;"><span style="color:#179fff">  }</span></span>
<span class="t m" style="left:391.200px;top:478px;line-height:19px;font-size:12.83px;color:#6e7681;letter-spacing:0">37</span>
<span class="t m" style="left:433px;top:478px;line-height:19px;font-size:12.83px;"><span style="color:#c586c0">  return </span><span style="color:#9cdcfe">res</span><span style="color:#d4d4d4">.</span><span style="color:#dcdcaa">json</span><span style="color:#179fff">(</span><span style="color:#ffd700">{</span><span style="color:#9cdcfe">text</span><span style="color:#ffd700">}</span><span style="color:#179fff">)</span><span style="color:#d4d4d4">;</span></span>
<span class="t m" style="left:391.200px;top:497px;line-height:19px;font-size:12.83px;color:#6e7681;letter-spacing:0">38</span>
<span class="t m" style="left:433px;top:497px;line-height:19px;font-size:12.83px;"><span style="color:#da70d6">}</span><span style="color:#ffd700">)</span><span style="color:#d4d4d4">;</span></span>
<span class="t m" style="left:391.200px;top:516px;line-height:19px;font-size:12.83px;color:#6e7681;letter-spacing:0">39</span>
<span class="t m" style="left:391.200px;top:535px;line-height:19px;font-size:12.83px;color:#6e7681;letter-spacing:0">40</span>
<span class="t m" style="left:433px;top:535px;line-height:19px;font-size:12.83px;"><span style="color:#4fc1ff">app</span><span style="color:#d4d4d4">.</span><span style="color:#dcdcaa">listen</span><span style="color:#ffd700">(</span><span style="color:#4fc1ff">PORT</span><span style="color:#d4d4d4">, </span><span style="color:#da70d6">()</span><span style="color:#569cd6"> =&gt; </span><span style="color:#da70d6">{</span></span>
<span class="t m" style="left:391.200px;top:554px;line-height:19px;font-size:12.83px;color:#6e7681;letter-spacing:0">41</span>
<span class="t m" style="left:433px;top:554px;line-height:19px;font-size:12.83px;"><span style="color:#9cdcfe">  console</span><span style="color:#d4d4d4">.</span><span style="color:#dcdcaa">log</span><span style="color:#179fff">(</span><span style="color:#ce9178">`Server is running in port - </span><span style="color:#ffd700">${</span><span style="color:#4fc1ff">PORT</span><span style="color:#ffd700">}</span><span style="color:#ce9178">`</span><span style="color:#179fff">)</span><span style="color:#d4d4d4">;</span></span>
<span class="t m" style="left:391.200px;top:573px;line-height:19px;font-size:12.83px;color:#6e7681;letter-spacing:0">42</span>
<span class="t m" style="left:433px;top:573px;line-height:19px;font-size:12.83px;"><span style="color:#da70d6">}</span><span style="color:#ffd700">)</span><span style="color:#d4d4d4">;</span></span>
<span class="t m" style="left:391.200px;top:592px;line-height:19px;font-size:12.83px;color:#cccccc;letter-spacing:0">43</span>
<div class="r" style="left:557.5px;top:114px;width:1px;height:1px;background:#b0b0b0;"></div>
<div class="r" style="left:560.5px;top:114px;width:1px;height:1px;background:#b0b0b0;"></div>
<div class="r" style="left:563.5px;top:114px;width:1px;height:1px;background:#b0b0b0;"></div>
<div class="r" style="left:330px;top:238px;width:92.2px;height:43px;background:transparent;border:2px solid #ff2a00;box-sizing:border-box"></div>
<div class="r" style="left:1086.2px;top:92px;width:2.94px;height:1.5px;background:#6a9955;opacity:0.55"></div>
<div class="r" style="left:1087.18px;top:94px;width:0.98px;height:1.5px;background:#6a9955;opacity:0.55"></div>
<div class="r" style="left:1089.14px;top:94px;width:8.82px;height:1.5px;background:#6a9955;opacity:0.55"></div>
<div class="r" style="left:1098.94px;top:94px;width:3.92px;height:1.5px;background:#6a9955;opacity:0.55"></div>
<div class="r" style="left:1103.84px;top:94px;width:5.88px;height:1.5px;background:#6a9955;opacity:0.55"></div>
<div class="r" style="left:1110.7px;top:94px;width:3.92px;height:1.5px;background:#6a9955;opacity:0.55"></div>
<div class="r" style="left:1087.18px;top:96px;width:0.98px;height:1.5px;background:#6a9955;opacity:0.55"></div>
<div class="r" style="left:1087.18px;top:98px;width:0.98px;height:1.5px;background:#6a9955;opacity:0.55"></div>
<div class="r" style="left:1089.14px;top:98px;width:7.84px;height:1.5px;background:#6a9955;opacity:0.55"></div>
<div class="r" style="left:1097.96px;top:98px;width:4.9px;height:1.5px;background:#6a9955;opacity:0.55"></div>
<div class="r" style="left:1103.84px;top:98px;width:2.94px;height:1.5px;background:#6a9955;opacity:0.55"></div>
<div class="r" style="left:1107.76px;top:98px;width:5.88px;height:1.5px;background:#6a9955;opacity:0.55"></div>
<div class="r" style="left:1114.62px;top:98px;width:7.84px;height:1.5px;background:#6a9955;opacity:0.55"></div>
<div class="r" style="left:1123.44px;top:98px;width:6.86px;height:1.5px;background:#6a9955;opacity:0.55"></div>
<div class="r" style="left:1131.28px;top:98px;width:2.94px;height:1.5px;background:#6a9955;opacity:0.55"></div>
<div class="r" style="left:1135.2px;top:98px;width:3.92px;height:1.5px;background:#6a9955;opacity:0.55"></div>
<div class="r" style="left:1140.1px;top:98px;width:10.78px;height:1.5px;background:#6a9955;opacity:0.55"></div>
<div class="r" style="left:1087.18px;top:100px;width:0.98px;height:1.5px;background:#6a9955;opacity:0.55"></div>
<div class="r" style="left:1089.14px;top:100px;width:2.94px;height:1.5px;background:#6a9955;opacity:0.55"></div>
<div class="r" style="left:1093.06px;top:100px;width:2.94px;height:1.5px;background:#6a9955;opacity:0.55"></div>
<div class="r" style="left:1096.98px;top:100px;width:2.94px;height:1.5px;background:#6a9955;opacity:0.55"></div>
<div class="r" style="left:1100.9px;top:100px;width:2.94px;height:1.5px;background:#6a9955;opacity:0.55"></div>
<div class="r" style="left:1104.82px;top:100px;width:3.92px;height:1.5px;background:#6a9955;opacity:0.55"></div>
<div class="r" style="left:1109.72px;top:100px;width:3.92px;height:1.5px;background:#6a9955;opacity:0.55"></div>
<div class="r" style="left:1114.62px;top:100px;width:5.88px;height:1.5px;background:#6a9955;opacity:0.55"></div>
<div class="r" style="left:1121.48px;top:100px;width:1.96px;height:1.5px;background:#6a9955;opacity:0.55"></div>
<div class="r" style="left:1124.42px;top:100px;width:9.8px;height:1.5px;background:#6a9955;opacity:0.55"></div>
<div class="r" style="left:1135.2px;top:100px;width:3.92px;height:1.5px;background:#6a9955;opacity:0.55"></div>
<div class="r" style="left:1140.1px;top:100px;width:2.94px;height:1.5px;background:#6a9955;opacity:0.55"></div>
<div class="r" style="left:1144.02px;top:100px;width:7.84px;height:1.5px;background:#6a9955;opacity:0.55"></div>
<div class="r" style="left:1087.18px;top:102px;width:0.98px;height:1.5px;background:#6a9955;opacity:0.55"></div>
<div class="r" style="left:1089.14px;top:102px;width:2.94px;height:1.5px;background:#6a9955;opacity:0.55"></div>
<div class="r" style="left:1093.06px;top:102px;width:2.94px;height:1.5px;background:#6a9955;opacity:0.55"></div>
<div class="r" style="left:1096.98px;top:102px;width:5.88px;height:1.5px;background:#6a9955;opacity:0.55"></div>
<div class="r" style="left:1103.84px;top:102px;width:0.98px;height:1.5px;background:#6a9955;opacity:0.55"></div>
<div class="r" style="left:1105.8px;top:102px;width:3.92px;height:1.5px;background:#6a9955;opacity:0.55"></div>
<div class="r" style="left:1110.7px;top:102px;width:1.96px;height:1.5px;background:#6a9955;opacity:0.55"></div>
<div class="r" style="left:1113.64px;top:102px;width:2.94px;height:1.5px;background:#6a9955;opacity:0.55"></div>
<div class="r" style="left:1117.56px;top:102px;width:6.86px;height:1.5px;background:#6a9955;opacity:0.55"></div>
<div class="r" style="left:1125.4px;top:102px;width:1.96px;height:1.5px;background:#6a9955;opacity:0.55"></div>
<div class="r" style="left:1087.18px;top:104px;width:0.98px;height:1.5px;background:#6a9955;opacity:0.55"></div>
<div class="r" style="left:1087.18px;top:106px;width:0.98px;height:1.5px;background:#6a9955;opacity:0.55"></div>
<div class="r" style="left:1089.14px;top:106px;width:41.16px;height:1.5px;background:#6a9955;opacity:0.55"></div>
<div class="r" style="left:1087.18px;top:108px;width:0.98px;height:1.5px;background:#6a9955;opacity:0.55"></div>
<div class="r" style="left:1087.18px;top:110px;width:0.98px;height:1.5px;background:#6a9955;opacity:0.55"></div>
<div class="r" style="left:1089.14px;top:110px;width:5.88px;height:1.5px;background:#6a9955;opacity:0.55"></div>
<div class="r" style="left:1096.0px;top:110px;width:7.84px;height:1.5px;background:#6a9955;opacity:0.55"></div>
<div class="r" style="left:1104.82px;top:110px;width:1.96px;height:1.5px;background:#6a9955;opacity:0.55"></div>
<div class="r" style="left:1107.76px;top:110px;width:9.8px;height:1.5px;background:#6a9955;opacity:0.55"></div>
<div class="r" style="left:1118.54px;top:110px;width:2.94px;height:1.5px;background:#6a9955;opacity:0.55"></div>
<div class="r" style="left:1122.46px;top:110px;width:1.96px;height:1.5px;background:#6a9955;opacity:0.55"></div>
<div class="r" style="left:1125.4px;top:110px;width:5.88px;height:1.5px;background:#6a9955;opacity:0.55"></div>
<div class="r" style="left:1132.26px;top:110px;width:1.96px;height:1.5px;background:#6a9955;opacity:0.55"></div>
<div class="r" style="left:1135.2px;top:110px;width:1.96px;height:1.5px;background:#6a9955;opacity:0.55"></div>
<div class="r" style="left:1138.14px;top:110px;width:7.84px;height:1.5px;background:#6a9955;opacity:0.55"></div>
<div class="r" style="left:1146.96px;top:110px;width:7.84px;height:1.5px;background:#6a9955;opacity:0.55"></div>
<div class="r" style="left:1087.18px;top:112px;width:0.98px;height:1.5px;background:#6a9955;opacity:0.55"></div>
<div class="r" style="left:1089.14px;top:112px;width:10.78px;height:1.5px;background:#6a9955;opacity:0.55"></div>
<div class="r" style="left:1100.9px;top:112px;width:4.9px;height:1.5px;background:#6a9955;opacity:0.55"></div>
<div class="r" style="left:1106.78px;top:112px;width:2.94px;height:1.5px;background:#6a9955;opacity:0.55"></div>
<div class="r" style="left:1110.7px;top:112px;width:6.86px;height:1.5px;background:#6a9955;opacity:0.55"></div>
<div class="r" style="left:1118.54px;top:112px;width:1.96px;height:1.5px;background:#6a9955;opacity:0.55"></div>
<div class="r" style="left:1121.48px;top:112px;width:10.78px;height:1.5px;background:#6a9955;opacity:0.55"></div>
<div class="r" style="left:1133.24px;top:112px;width:1.96px;height:1.5px;background:#6a9955;opacity:0.55"></div>
<div class="r" style="left:1136.18px;top:112px;width:1.96px;height:1.5px;background:#6a9955;opacity:0.55"></div>
<div class="r" style="left:1139.12px;top:112px;width:2.94px;height:1.5px;background:#6a9955;opacity:0.55"></div>
<div class="r" style="left:1143.04px;top:112px;width:2.94px;height:1.5px;background:#6a9955;opacity:0.55"></div>
<div class="r" style="left:1146.96px;top:112px;width:5.88px;height:1.5px;background:#6a9955;opacity:0.55"></div>
<div class="r" style="left:1087.18px;top:114px;width:0.98px;height:1.5px;background:#6a9955;opacity:0.55"></div>
<div class="r" style="left:1089.14px;top:114px;width:6.86px;height:1.5px;background:#6a9955;opacity:0.55"></div>
<div class="r" style="left:1096.98px;top:114px;width:9.8px;height:1.5px;background:#6a9955;opacity:0.55"></div>
<div class="r" style="left:1107.76px;top:114px;width:1.96px;height:1.5px;background:#6a9955;opacity:0.55"></div>
<div class="r" style="left:1110.7px;top:114px;width:9.8px;height:1.5px;background:#6a9955;opacity:0.55"></div>
<div class="r" style="left:1121.48px;top:114px;width:1.96px;height:1.5px;background:#6a9955;opacity:0.55"></div>
<div class="r" style="left:1124.42px;top:114px;width:2.94px;height:1.5px;background:#6a9955;opacity:0.55"></div>
<div class="r" style="left:1128.34px;top:114px;width:4.9px;height:1.5px;background:#6a9955;opacity:0.55"></div>
<div class="r" style="left:1134.22px;top:114px;width:5.88px;height:1.5px;background:#6a9955;opacity:0.55"></div>
<div class="r" style="left:1141.08px;top:114px;width:6.86px;height:1.5px;background:#6a9955;opacity:0.55"></div>
<div class="r" style="left:1148.92px;top:114px;width:1.96px;height:1.5px;background:#6a9955;opacity:0.55"></div>
<div class="r" style="left:1151.86px;top:114px;width:7.84px;height:1.5px;background:#6a9955;opacity:0.55"></div>
<div class="r" style="left:1087.18px;top:116px;width:0.98px;height:1.5px;background:#6a9955;opacity:0.55"></div>
<div class="r" style="left:1089.14px;top:116px;width:2.94px;height:1.5px;background:#6a9955;opacity:0.55"></div>
<div class="r" style="left:1093.06px;top:116px;width:2.94px;height:1.5px;background:#6a9955;opacity:0.55"></div>
<div class="r" style="left:1096.98px;top:116px;width:6.86px;height:1.5px;background:#6a9955;opacity:0.55"></div>
<div class="r" style="left:1104.82px;top:116px;width:2.94px;height:1.5px;background:#6a9955;opacity:0.55"></div>
<div class="r" style="left:1108.74px;top:116px;width:2.94px;height:1.5px;background:#6a9955;opacity:0.55"></div>
<div class="r" style="left:1112.66px;top:116px;width:7.84px;height:1.5px;background:#6a9955;opacity:0.55"></div>
<div class="r" style="left:1121.48px;top:116px;width:7.84px;height:1.5px;background:#6a9955;opacity:0.55"></div>
<div class="r" style="left:1130.3px;top:116px;width:8.82px;height:1.5px;background:#6a9955;opacity:0.55"></div>
<div class="r" style="left:1140.1px;top:116px;width:10.78px;height:1.5px;background:#6a9955;opacity:0.55"></div>
<div class="r" style="left:1151.86px;top:116px;width:2.94px;height:1.5px;background:#6a9955;opacity:0.55"></div>
<div class="r" style="left:1087.18px;top:118px;width:0.98px;height:1.5px;background:#6a9955;opacity:0.55"></div>
<div class="r" style="left:1089.14px;top:118px;width:10.78px;height:1.5px;background:#6a9955;opacity:0.55"></div>
<div class="r" style="left:1100.9px;top:118px;width:4.9px;height:1.5px;background:#6a9955;opacity:0.55"></div>
<div class="r" style="left:1106.78px;top:118px;width:2.94px;height:1.5px;background:#6a9955;opacity:0.55"></div>
<div class="r" style="left:1110.7px;top:118px;width:7.84px;height:1.5px;background:#6a9955;opacity:0.55"></div>
<div class="r" style="left:1087.18px;top:120px;width:1.96px;height:1.5px;background:#6a9955;opacity:0.55"></div>
<div class="r" style="left:1086.2px;top:124px;width:4.9px;height:1.5px;background:#569cd6;opacity:0.42"></div>
<div class="r" style="left:1092.08px;top:124px;width:6.86px;height:1.5px;background:#dcdcaa;opacity:0.42"></div>
<div class="r" style="left:1099.92px;top:124px;width:0.98px;height:1.5px;background:#d4d4d4;opacity:0.42"></div>
<div class="r" style="left:1101.88px;top:124px;width:6.86px;height:1.5px;background:#dcdcaa;opacity:0.42"></div>
<div class="r" style="left:1108.74px;top:124px;width:0.98px;height:1.5px;background:#ffd700;opacity:0.25"></div>
<div class="r" style="left:1109.72px;top:124px;width:8.82px;height:1.5px;background:#ce9178;opacity:0.42"></div>
<div class="r" style="left:1118.54px;top:124px;width:0.98px;height:1.5px;background:#ffd700;opacity:0.25"></div>
<div class="r" style="left:1119.52px;top:124px;width:0.98px;height:1.5px;background:#d4d4d4;opacity:0.42"></div>
<div class="r" style="left:1086.2px;top:126px;width:4.9px;height:1.5px;background:#569cd6;opacity:0.42"></div>
<div class="r" style="left:1092.08px;top:126px;width:3.92px;height:1.5px;background:#4fc1ff;opacity:0.42"></div>
<div class="r" style="left:1096.98px;top:126px;width:0.98px;height:1.5px;background:#d4d4d4;opacity:0.42"></div>
<div class="r" style="left:1098.94px;top:126px;width:6.86px;height:1.5px;background:#9cdcfe;opacity:0.42"></div>
<div class="r" style="left:1105.8px;top:126px;width:0.98px;height:1.5px;background:#d4d4d4;opacity:0.42"></div>
<div class="r" style="left:1106.78px;top:126px;width:2.94px;height:1.5px;background:#9cdcfe;opacity:0.42"></div>
<div class="r" style="left:1109.72px;top:126px;width:0.98px;height:1.5px;background:#d4d4d4;opacity:0.42"></div>
<div class="r" style="left:1110.7px;top:126px;width:3.92px;height:1.5px;background:#4fc1ff;opacity:0.42"></div>
<div class="r" style="left:1115.6px;top:126px;width:1.96px;height:1.5px;background:#d4d4d4;opacity:0.42"></div>
<div class="r" style="left:1118.54px;top:126px;width:3.92px;height:1.5px;background:#b5cea8;opacity:0.42"></div>
<div class="r" style="left:1122.46px;top:126px;width:0.98px;height:1.5px;background:#d4d4d4;opacity:0.42"></div>
<div class="r" style="left:1086.2px;top:130px;width:4.9px;height:1.5px;background:#569cd6;opacity:0.42"></div>
<div class="r" style="left:1092.08px;top:130px;width:2.94px;height:1.5px;background:#4fc1ff;opacity:0.42"></div>
<div class="r" style="left:1096.0px;top:130px;width:0.98px;height:1.5px;background:#d4d4d4;opacity:0.42"></div>
<div class="r" style="left:1097.96px;top:130px;width:6.86px;height:1.5px;background:#dcdcaa;opacity:0.42"></div>
<div class="r" style="left:1104.82px;top:130px;width:1.96px;height:1.5px;background:#ffd700;opacity:0.25"></div>
<div class="r" style="left:1088.16px;top:132px;width:0.98px;height:1.5px;background:#d4d4d4;opacity:0.42"></div>
<div class="r" style="left:1089.14px;top:132px;width:2.94px;height:1.5px;background:#dcdcaa;opacity:0.42"></div>
<div class="r" style="left:1092.08px;top:132px;width:0.98px;height:1.5px;background:#ffd700;opacity:0.25"></div>
<div class="r" style="left:1093.06px;top:132px;width:6.86px;height:1.5px;background:#dcdcaa;opacity:0.42"></div>
<div class="r" style="left:1099.92px;top:132px;width:0.98px;height:1.5px;background:#d4d4d4;opacity:0.42"></div>
<div class="r" style="left:1100.9px;top:132px;width:9.8px;height:1.5px;background:#dcdcaa;opacity:0.42"></div>
<div class="r" style="left:1110.7px;top:132px;width:0.98px;height:1.5px;background:#da70d6;opacity:0.25"></div>
<div class="r" style="left:1111.68px;top:132px;width:0.98px;height:1.5px;background:#179fff;opacity:0.25"></div>
<div class="r" style="left:1112.66px;top:132px;width:7.84px;height:1.5px;background:#9cdcfe;opacity:0.42"></div>
<div class="r" style="left:1120.5px;top:132px;width:0.98px;height:1.5px;background:#d4d4d4;opacity:0.42"></div>
<div class="r" style="left:1122.46px;top:132px;width:4.9px;height:1.5px;background:#569cd6;opacity:0.42"></div>
<div class="r" style="left:1127.36px;top:132px;width:0.98px;height:1.5px;background:#179fff;opacity:0.25"></div>
<div class="r" style="left:1128.34px;top:132px;width:0.98px;height:1.5px;background:#da70d6;opacity:0.25"></div>
<div class="r" style="left:1129.32px;top:132px;width:0.98px;height:1.5px;background:#ffd700;opacity:0.25"></div>
<div class="r" style="left:1088.16px;top:134px;width:0.98px;height:1.5px;background:#d4d4d4;opacity:0.42"></div>
<div class="r" style="left:1089.14px;top:134px;width:2.94px;height:1.5px;background:#dcdcaa;opacity:0.42"></div>
<div class="r" style="left:1092.08px;top:134px;width:0.98px;height:1.5px;background:#ffd700;opacity:0.25"></div>
<div class="r" style="left:1093.06px;top:134px;width:6.86px;height:1.5px;background:#dcdcaa;opacity:0.42"></div>
<div class="r" style="left:1099.92px;top:134px;width:0.98px;height:1.5px;background:#d4d4d4;opacity:0.42"></div>
<div class="r" style="left:1100.9px;top:134px;width:3.92px;height:1.5px;background:#dcdcaa;opacity:0.42"></div>
<div class="r" style="left:1104.82px;top:134px;width:1.96px;height:1.5px;background:#da70d6;opacity:0.25"></div>
<div class="r" style="left:1106.78px;top:134px;width:0.98px;height:1.5px;background:#ffd700;opacity:0.25"></div>
<div class="r" style="left:1107.76px;top:134px;width:0.98px;height:1.5px;background:#d4d4d4;opacity:0.42"></div>
<div class="r" style="left:1086.2px;top:138px;width:2.94px;height:1.5px;background:#4fc1ff;opacity:0.42"></div>
<div class="r" style="left:1089.14px;top:138px;width:0.98px;height:1.5px;background:#d4d4d4;opacity:0.42"></div>
<div class="r" style="left:1090.12px;top:138px;width:3.92px;height:1.5px;background:#dcdcaa;opacity:0.42"></div>
<div class="r" style="left:1094.04px;top:138px;width:0.98px;height:1.5px;background:#ffd700;opacity:0.25"></div>
<div class="r" style="left:1095.02px;top:138px;width:2.94px;height:1.5px;background:#ce9178;opacity:0.42"></div>
<div class="r" style="left:1097.96px;top:138px;width:0.98px;height:1.5px;background:#d4d4d4;opacity:0.42"></div>
<div class="r" style="left:1099.92px;top:138px;width:0.98px;height:1.5px;background:#da70d6;opacity:0.25"></div>
<div class="r" style="left:1100.9px;top:138px;width:2.94px;height:1.5px;background:#9cdcfe;opacity:0.42"></div>
<div class="r" style="left:1103.84px;top:138px;width:0.98px;height:1.5px;background:#d4d4d4;opacity:0.42"></div>
<div class="r" style="left:1105.8px;top:138px;width:2.94px;height:1.5px;background:#9cdcfe;opacity:0.42"></div>
<div class="r" style="left:1108.74px;top:138px;width:0.98px;height:1.5px;background:#da70d6;opacity:0.25"></div>
<div class="r" style="left:1110.7px;top:138px;width:1.96px;height:1.5px;background:#569cd6;opacity:0.42"></div>
<div class="r" style="left:1113.64px;top:138px;width:0.98px;height:1.5px;background:#da70d6;opacity:0.25"></div>
<div class="r" style="left:1088.16px;top:140px;width:2.94px;height:1.5px;background:#569cd6;opacity:0.42"></div>
<div class="r" style="left:1092.08px;top:140px;width:3.92px;height:1.5px;background:#9cdcfe;opacity:0.42"></div>
<div class="r" style="left:1096.98px;top:140px;width:0.98px;height:1.5px;background:#d4d4d4;opacity:0.42"></div>
<div class="r" style="left:1098.94px;top:140px;width:1.96px;height:1.5px;background:#ce9178;opacity:0.42"></div>
<div class="r" style="left:1100.9px;top:140px;width:0.98px;height:1.5px;background:#d4d4d4;opacity:0.42"></div>
<div class="r" style="left:1088.16px;top:142px;width:1.96px;height:1.5px;background:#6a9955;opacity:0.42"></div>
<div class="r" style="left:1091.1px;top:142px;width:3.92px;height:1.5px;background:#6a9955;opacity:0.42"></div>
<div class="r" style="left:1096.0px;top:142px;width:1.96px;height:1.5px;background:#6a9955;opacity:0.42"></div>
<div class="r" style="left:1098.94px;top:142px;width:3.92px;height:1.5px;background:#6a9955;opacity:0.42"></div>
<div class="r" style="left:1103.84px;top:142px;width:2.94px;height:1.5px;background:#6a9955;opacity:0.42"></div>
<div class="r" style="left:1107.76px;top:142px;width:2.94px;height:1.5px;background:#6a9955;opacity:0.42"></div>
<div class="r" style="left:1111.68px;top:142px;width:4.9px;height:1.5px;background:#6a9955;opacity:0.42"></div>
<div class="r" style="left:1117.56px;top:142px;width:1.96px;height:1.5px;background:#6a9955;opacity:0.42"></div>
<div class="r" style="left:1120.5px;top:142px;width:2.94px;height:1.5px;background:#6a9955;opacity:0.42"></div>
<div class="r" style="left:1124.42px;top:142px;width:3.92px;height:1.5px;background:#6a9955;opacity:0.42"></div>
<div class="r" style="left:1088.16px;top:144px;width:1.96px;height:1.5px;background:#c586c0;opacity:0.42"></div>
<div class="r" style="left:1091.1px;top:144px;width:0.98px;height:1.5px;background:#179fff;opacity:0.25"></div>
<div class="r" style="left:1092.08px;top:144px;width:2.94px;height:1.5px;background:#9cdcfe;opacity:0.42"></div>
<div class="r" style="left:1095.02px;top:144px;width:0.98px;height:1.5px;background:#d4d4d4;opacity:0.42"></div>
<div class="r" style="left:1096.0px;top:144px;width:3.92px;height:1.5px;background:#9cdcfe;opacity:0.42"></div>
<div class="r" style="left:1099.92px;top:144px;width:0.98px;height:1.5px;background:#d4d4d4;opacity:0.42"></div>
<div class="r" style="left:1100.9px;top:144px;width:3.92px;height:1.5px;background:#9cdcfe;opacity:0.42"></div>
<div class="r" style="left:1105.8px;top:144px;width:2.94px;height:1.5px;background:#d4d4d4;opacity:0.42"></div>
<div class="r" style="left:1109.72px;top:144px;width:15.68px;height:1.5px;background:#ce9178;opacity:0.42"></div>
<div class="r" style="left:1126.38px;top:144px;width:1.96px;height:1.5px;background:#d4d4d4;opacity:0.42"></div>
<div class="r" style="left:1129.32px;top:144px;width:2.94px;height:1.5px;background:#9cdcfe;opacity:0.42"></div>
<div class="r" style="left:1132.26px;top:144px;width:0.98px;height:1.5px;background:#d4d4d4;opacity:0.42"></div>
<div class="r" style="left:1133.24px;top:144px;width:3.92px;height:1.5px;background:#9cdcfe;opacity:0.42"></div>
<div class="r" style="left:1137.16px;top:144px;width:0.98px;height:1.5px;background:#d4d4d4;opacity:0.42"></div>
<div class="r" style="left:1138.14px;top:144px;width:4.9px;height:1.5px;background:#9cdcfe;opacity:0.42"></div>
<div class="r" style="left:1143.04px;top:144px;width:0.98px;height:1.5px;background:#d4d4d4;opacity:0.42"></div>
<div class="r" style="left:1144.02px;top:144px;width:3.92px;height:1.5px;background:#9cdcfe;opacity:0.42"></div>
<div class="r" style="left:1148.92px;top:144px;width:2.94px;height:1.5px;background:#d4d4d4;opacity:0.42"></div>
<div class="r" style="left:1152.84px;top:144px;width:5.88px;height:1.5px;background:#ce9178;opacity:0.42"></div>
<div class="r" style="left:1158.72px;top:144px;width:0.98px;height:1.5px;background:#179fff;opacity:0.25"></div>
<div class="r" style="left:1160.68px;top:144px;width:0.98px;height:1.5px;background:#179fff;opacity:0.25"></div>
<div class="r" style="left:1090.12px;top:146px;width:3.92px;height:1.5px;background:#9cdcfe;opacity:0.42"></div>
<div class="r" style="left:1095.02px;top:146px;width:0.98px;height:1.5px;background:#d4d4d4;opacity:0.42"></div>
<div class="r" style="left:1096.98px;top:146px;width:6.86px;height:1.5px;background:#ce9178;opacity:0.42"></div>
<div class="r" style="left:1104.82px;top:146px;width:2.94px;height:1.5px;background:#ce9178;opacity:0.42"></div>
<div class="r" style="left:1108.74px;top:146px;width:5.88px;height:1.5px;background:#ce9178;opacity:0.42"></div>
<div class="r" style="left:1115.6px;top:146px;width:1.96px;height:1.5px;background:#ce9178;opacity:0.42"></div>
<div class="r" style="left:1118.54px;top:146px;width:1.96px;height:1.5px;background:#ce9178;opacity:0.42"></div>
<div class="r" style="left:1121.48px;top:146px;width:1.96px;height:1.5px;background:#ffd700;opacity:0.25"></div>
<div class="r" style="left:1123.44px;top:146px;width:2.94px;height:1.5px;background:#9cdcfe;opacity:0.42"></div>
<div class="r" style="left:1126.38px;top:146px;width:0.98px;height:1.5px;background:#d4d4d4;opacity:0.42"></div>
<div class="r" style="left:1127.36px;top:146px;width:3.92px;height:1.5px;background:#9cdcfe;opacity:0.42"></div>
<div class="r" style="left:1131.28px;top:146px;width:0.98px;height:1.5px;background:#d4d4d4;opacity:0.42"></div>
<div class="r" style="left:1132.26px;top:146px;width:4.9px;height:1.5px;background:#9cdcfe;opacity:0.42"></div>
<div class="r" style="left:1137.16px;top:146px;width:0.98px;height:1.5px;background:#d4d4d4;opacity:0.42"></div>
<div class="r" style="left:1138.14px;top:146px;width:10.78px;height:1.5px;background:#9cdcfe;opacity:0.42"></div>
<div class="r" style="left:1148.92px;top:146px;width:0.98px;height:1.5px;background:#ffd700;opacity:0.25"></div>
<div class="r" style="left:1149.9px;top:146px;width:0.98px;height:1.5px;background:#ce9178;opacity:0.42"></div>
<div class="r" style="left:1150.88px;top:146px;width:0.98px;height:1.5px;background:#d4d4d4;opacity:0.42"></div>
<div class="r" style="left:1090.12px;top:148px;width:1.96px;height:1.5px;background:#6a9955;opacity:0.42"></div>
<div class="r" style="left:1093.06px;top:148px;width:3.92px;height:1.5px;background:#6a9955;opacity:0.42"></div>
<div class="r" style="left:1097.96px;top:148px;width:1.96px;height:1.5px;background:#6a9955;opacity:0.42"></div>
<div class="r" style="left:1100.9px;top:148px;width:3.92px;height:1.5px;background:#6a9955;opacity:0.42"></div>
<div class="r" style="left:1105.8px;top:148px;width:2.94px;height:1.5px;background:#6a9955;opacity:0.42"></div>
<div class="r" style="left:1109.72px;top:148px;width:2.94px;height:1.5px;background:#6a9955;opacity:0.42"></div>
<div class="r" style="left:1113.64px;top:148px;width:4.9px;height:1.5px;background:#6a9955;opacity:0.42"></div>
<div class="r" style="left:1119.52px;top:148px;width:1.96px;height:1.5px;background:#6a9955;opacity:0.42"></div>
<div class="r" style="left:1122.46px;top:148px;width:0.98px;height:1.5px;background:#6a9955;opacity:0.42"></div>
<div class="r" style="left:1124.42px;top:148px;width:1.96px;height:1.5px;background:#6a9955;opacity:0.42"></div>
<div class="r" style="left:1088.16px;top:150px;width:0.98px;height:1.5px;background:#179fff;opacity:0.25"></div>
<div class="r" style="left:1090.12px;top:150px;width:3.92px;height:1.5px;background:#c586c0;opacity:0.42"></div>
<div class="r" style="left:1095.02px;top:150px;width:1.96px;height:1.5px;background:#c586c0;opacity:0.42"></div>
<div class="r" style="left:1097.96px;top:150px;width:0.98px;height:1.5px;background:#179fff;opacity:0.25"></div>
<div class="r" style="left:1098.94px;top:150px;width:2.94px;height:1.5px;background:#9cdcfe;opacity:0.42"></div>
<div class="r" style="left:1101.88px;top:150px;width:0.98px;height:1.5px;background:#d4d4d4;opacity:0.42"></div>
<div class="r" style="left:1102.86px;top:150px;width:3.92px;height:1.5px;background:#9cdcfe;opacity:0.42"></div>
<div class="r" style="left:1106.78px;top:150px;width:0.98px;height:1.5px;background:#d4d4d4;opacity:0.42"></div>
<div class="r" style="left:1107.76px;top:150px;width:3.92px;height:1.5px;background:#9cdcfe;opacity:0.42"></div>
<div class="r" style="left:1112.66px;top:150px;width:2.94px;height:1.5px;background:#d4d4d4;opacity:0.42"></div>
<div class="r" style="left:1116.58px;top:150px;width:15.68px;height:1.5px;background:#ce9178;opacity:0.42"></div>
<div class="r" style="left:1133.24px;top:150px;width:1.96px;height:1.5px;background:#d4d4d4;opacity:0.42"></div>
<div class="r" style="left:1090.12px;top:152px;width:2.94px;height:1.5px;background:#9cdcfe;opacity:0.42"></div>
<div class="r" style="left:1093.06px;top:152px;width:0.98px;height:1.5px;background:#d4d4d4;opacity:0.42"></div>
<div class="r" style="left:1094.04px;top:152px;width:3.92px;height:1.5px;background:#9cdcfe;opacity:0.42"></div>
<div class="r" style="left:1097.96px;top:152px;width:0.98px;height:1.5px;background:#d4d4d4;opacity:0.42"></div>
<div class="r" style="left:1098.94px;top:152px;width:4.9px;height:1.5px;background:#9cdcfe;opacity:0.42"></div>
<div class="r" style="left:1103.84px;top:152px;width:0.98px;height:1.5px;background:#d4d4d4;opacity:0.42"></div>
<div class="r" style="left:1104.82px;top:152px;width:3.92px;height:1.5px;background:#9cdcfe;opacity:0.42"></div>
<div class="r" style="left:1109.72px;top:152px;width:2.94px;height:1.5px;background:#d4d4d4;opacity:0.42"></div>
<div class="r" style="left:1113.64px;top:152px;width:3.92px;height:1.5px;background:#ce9178;opacity:0.42"></div>
<div class="r" style="left:1117.56px;top:152px;width:0.98px;height:1.5px;background:#179fff;opacity:0.25"></div>
<div class="r" style="left:1119.52px;top:152px;width:0.98px;height:1.5px;background:#179fff;opacity:0.25"></div>
<div class="r" style="left:1090.12px;top:154px;width:3.92px;height:1.5px;background:#9cdcfe;opacity:0.42"></div>
<div class="r" style="left:1095.02px;top:154px;width:0.98px;height:1.5px;background:#d4d4d4;opacity:0.42"></div>
<div class="r" style="left:1096.98px;top:154px;width:6.86px;height:1.5px;background:#ce9178;opacity:0.42"></div>
<div class="r" style="left:1104.82px;top:154px;width:2.94px;height:1.5px;background:#ce9178;opacity:0.42"></div>
<div class="r" style="left:1108.74px;top:154px;width:5.88px;height:1.5px;background:#ce9178;opacity:0.42"></div>
<div class="r" style="left:1115.6px;top:154px;width:1.96px;height:1.5px;background:#ce9178;opacity:0.42"></div>
<div class="r" style="left:1118.54px;top:154px;width:1.96px;height:1.5px;background:#ce9178;opacity:0.42"></div>
<div class="r" style="left:1121.48px;top:154px;width:0.98px;height:1.5px;background:#ce9178;opacity:0.42"></div>
<div class="r" style="left:1123.44px;top:154px;width:2.94px;height:1.5px;background:#ce9178;opacity:0.42"></div>
<div class="r" style="left:1127.36px;top:154px;width:1.96px;height:1.5px;background:#ffd700;opacity:0.25"></div>
<div class="r" style="left:1129.32px;top:154px;width:2.94px;height:1.5px;background:#9cdcfe;opacity:0.42"></div>
<div class="r" style="left:1132.26px;top:154px;width:0.98px;height:1.5px;background:#d4d4d4;opacity:0.42"></div>
<div class="r" style="left:1133.24px;top:154px;width:3.92px;height:1.5px;background:#9cdcfe;opacity:0.42"></div>
<div class="r" style="left:1137.16px;top:154px;width:0.98px;height:1.5px;background:#d4d4d4;opacity:0.42"></div>
<div class="r" style="left:1138.14px;top:154px;width:3.92px;height:1.5px;background:#9cdcfe;opacity:0.42"></div>
<div class="r" style="left:1142.06px;top:154px;width:0.98px;height:1.5px;background:#d4d4d4;opacity:0.42"></div>
<div class="r" style="left:1143.04px;top:154px;width:10.78px;height:1.5px;background:#9cdcfe;opacity:0.42"></div>
<div class="r" style="left:1153.82px;top:154px;width:0.98px;height:1.5px;background:#ffd700;opacity:0.25"></div>
<div class="r" style="left:1154.8px;top:154px;width:0.98px;height:1.5px;background:#ce9178;opacity:0.42"></div>
<div class="r" style="left:1155.78px;top:154px;width:0.98px;height:1.5px;background:#d4d4d4;opacity:0.42"></div>
<div class="r" style="left:1090.12px;top:156px;width:1.96px;height:1.5px;background:#6a9955;opacity:0.42"></div>
<div class="r" style="left:1093.06px;top:156px;width:3.92px;height:1.5px;background:#6a9955;opacity:0.42"></div>
<div class="r" style="left:1097.96px;top:156px;width:1.96px;height:1.5px;background:#6a9955;opacity:0.42"></div>
<div class="r" style="left:1100.9px;top:156px;width:6.86px;height:1.5px;background:#6a9955;opacity:0.42"></div>
<div class="r" style="left:1108.74px;top:156px;width:2.94px;height:1.5px;background:#6a9955;opacity:0.42"></div>
<div class="r" style="left:1112.66px;top:156px;width:2.94px;height:1.5px;background:#6a9955;opacity:0.42"></div>
<div class="r" style="left:1088.16px;top:158px;width:0.98px;height:1.5px;background:#179fff;opacity:0.25"></div>
<div class="r" style="left:1090.12px;top:158px;width:3.92px;height:1.5px;background:#c586c0;opacity:0.42"></div>
<div class="r" style="left:1095.02px;top:158px;width:1.96px;height:1.5px;background:#c586c0;opacity:0.42"></div>
<div class="r" style="left:1097.96px;top:158px;width:0.98px;height:1.5px;background:#179fff;opacity:0.25"></div>
<div class="r" style="left:1098.94px;top:158px;width:2.94px;height:1.5px;background:#9cdcfe;opacity:0.42"></div>
<div class="r" style="left:1101.88px;top:158px;width:0.98px;height:1.5px;background:#d4d4d4;opacity:0.42"></div>
<div class="r" style="left:1102.86px;top:158px;width:3.92px;height:1.5px;background:#9cdcfe;opacity:0.42"></div>
<div class="r" style="left:1106.78px;top:158px;width:0.98px;height:1.5px;background:#d4d4d4;opacity:0.42"></div>
<div class="r" style="left:1107.76px;top:158px;width:3.92px;height:1.5px;background:#9cdcfe;opacity:0.42"></div>
<div class="r" style="left:1112.66px;top:158px;width:2.94px;height:1.5px;background:#d4d4d4;opacity:0.42"></div>
<div class="r" style="left:1116.58px;top:158px;width:8.82px;height:1.5px;background:#ce9178;opacity:0.42"></div>
<div class="r" style="left:1125.4px;top:158px;width:0.98px;height:1.5px;background:#179fff;opacity:0.25"></div>
<div class="r" style="left:1127.36px;top:158px;width:0.98px;height:1.5px;background:#179fff;opacity:0.25"></div>
<div class="r" style="left:1090.12px;top:160px;width:3.92px;height:1.5px;background:#9cdcfe;opacity:0.42"></div>
<div class="r" style="left:1095.02px;top:160px;width:0.98px;height:1.5px;background:#d4d4d4;opacity:0.42"></div>
<div class="r" style="left:1096.98px;top:160px;width:4.9px;height:1.5px;background:#ce9178;opacity:0.42"></div>
<div class="r" style="left:1102.86px;top:160px;width:6.86px;height:1.5px;background:#ce9178;opacity:0.42"></div>
<div class="r" style="left:1110.7px;top:160px;width:0.98px;height:1.5px;background:#ce9178;opacity:0.42"></div>
<div class="r" style="left:1112.66px;top:160px;width:1.96px;height:1.5px;background:#ffd700;opacity:0.25"></div>
<div class="r" style="left:1114.62px;top:160px;width:2.94px;height:1.5px;background:#9cdcfe;opacity:0.42"></div>
<div class="r" style="left:1117.56px;top:160px;width:0.98px;height:1.5px;background:#d4d4d4;opacity:0.42"></div>
<div class="r" style="left:1118.54px;top:160px;width:3.92px;height:1.5px;background:#9cdcfe;opacity:0.42"></div>
<div class="r" style="left:1122.46px;top:160px;width:0.98px;height:1.5px;background:#d4d4d4;opacity:0.42"></div>
<div class="r" style="left:1123.44px;top:160px;width:6.86px;height:1.5px;background:#9cdcfe;opacity:0.42"></div>
<div class="r" style="left:1130.3px;top:160px;width:0.98px;height:1.5px;background:#d4d4d4;opacity:0.42"></div>
<div class="r" style="left:1131.28px;top:160px;width:3.92px;height:1.5px;background:#9cdcfe;opacity:0.42"></div>
<div class="r" style="left:1135.2px;top:160px;width:0.98px;height:1.5px;background:#ffd700;opacity:0.25"></div>
<div class="r" style="left:1136.18px;top:160px;width:0.98px;height:1.5px;background:#ce9178;opacity:0.42"></div>
<div class="r" style="left:1137.16px;top:160px;width:0.98px;height:1.5px;background:#d4d4d4;opacity:0.42"></div>
<div class="r" style="left:1088.16px;top:162px;width:0.98px;height:1.5px;background:#179fff;opacity:0.25"></div>
<div class="r" style="left:1088.16px;top:164px;width:5.88px;height:1.5px;background:#c586c0;opacity:0.42"></div>
<div class="r" style="left:1095.02px;top:164px;width:2.94px;height:1.5px;background:#9cdcfe;opacity:0.42"></div>
<div class="r" style="left:1097.96px;top:164px;width:0.98px;height:1.5px;background:#d4d4d4;opacity:0.42"></div>
<div class="r" style="left:1098.94px;top:164px;width:3.92px;height:1.5px;background:#dcdcaa;opacity:0.42"></div>
<div class="r" style="left:1102.86px;top:164px;width:0.98px;height:1.5px;background:#179fff;opacity:0.25"></div>
<div class="r" style="left:1103.84px;top:164px;width:0.98px;height:1.5px;background:#ffd700;opacity:0.25"></div>
<div class="r" style="left:1104.82px;top:164px;width:3.92px;height:1.5px;background:#9cdcfe;opacity:0.42"></div>
<div class="r" style="left:1108.74px;top:164px;width:0.98px;height:1.5px;background:#ffd700;opacity:0.25"></div>
<div class="r" style="left:1109.72px;top:164px;width:0.98px;height:1.5px;background:#179fff;opacity:0.25"></div>
<div class="r" style="left:1110.7px;top:164px;width:0.98px;height:1.5px;background:#d4d4d4;opacity:0.42"></div>
<div class="r" style="left:1086.2px;top:166px;width:0.98px;height:1.5px;background:#da70d6;opacity:0.25"></div>
<div class="r" style="left:1087.18px;top:166px;width:0.98px;height:1.5px;background:#ffd700;opacity:0.25"></div>
<div class="r" style="left:1088.16px;top:166px;width:0.98px;height:1.5px;background:#d4d4d4;opacity:0.42"></div>
<div class="r" style="left:1086.2px;top:170px;width:2.94px;height:1.5px;background:#4fc1ff;opacity:0.42"></div>
<div class="r" style="left:1089.14px;top:170px;width:0.98px;height:1.5px;background:#d4d4d4;opacity:0.42"></div>
<div class="r" style="left:1090.12px;top:170px;width:5.88px;height:1.5px;background:#dcdcaa;opacity:0.42"></div>
<div class="r" style="left:1096.0px;top:170px;width:0.98px;height:1.5px;background:#ffd700;opacity:0.25"></div>
<div class="r" style="left:1096.98px;top:170px;width:3.92px;height:1.5px;background:#4fc1ff;opacity:0.42"></div>
<div class="r" style="left:1100.9px;top:170px;width:0.98px;height:1.5px;background:#d4d4d4;opacity:0.42"></div>
<div class="r" style="left:1102.86px;top:170px;width:1.96px;height:1.5px;background:#da70d6;opacity:0.25"></div>
<div class="r" style="left:1105.8px;top:170px;width:1.96px;height:1.5px;background:#569cd6;opacity:0.42"></div>
<div class="r" style="left:1108.74px;top:170px;width:0.98px;height:1.5px;background:#da70d6;opacity:0.25"></div>
<div class="r" style="left:1088.16px;top:172px;width:6.86px;height:1.5px;background:#9cdcfe;opacity:0.42"></div>
<div class="r" style="left:1095.02px;top:172px;width:0.98px;height:1.5px;background:#d4d4d4;opacity:0.42"></div>
<div class="r" style="left:1096.0px;top:172px;width:2.94px;height:1.5px;background:#dcdcaa;opacity:0.42"></div>
<div class="r" style="left:1098.94px;top:172px;width:0.98px;height:1.5px;background:#179fff;opacity:0.25"></div>
<div class="r" style="left:1099.92px;top:172px;width:6.86px;height:1.5px;background:#ce9178;opacity:0.42"></div>
<div class="r" style="left:1107.76px;top:172px;width:1.96px;height:1.5px;background:#ce9178;opacity:0.42"></div>
<div class="r" style="left:1110.7px;top:172px;width:6.86px;height:1.5px;background:#ce9178;opacity:0.42"></div>
<div class="r" style="left:1118.54px;top:172px;width:1.96px;height:1.5px;background:#ce9178;opacity:0.42"></div>
<div class="r" style="left:1121.48px;top:172px;width:3.92px;height:1.5px;background:#ce9178;opacity:0.42"></div>
<div class="r" style="left:1126.38px;top:172px;width:0.98px;height:1.5px;background:#ce9178;opacity:0.42"></div>
<div class="r" style="left:1128.34px;top:172px;width:1.96px;height:1.5px;background:#ffd700;opacity:0.25"></div>
<div class="r" style="left:1130.3px;top:172px;width:3.92px;height:1.5px;background:#4fc1ff;opacity:0.42"></div>
<div class="r" style="left:1134.22px;top:172px;width:0.98px;height:1.5px;background:#ffd700;opacity:0.25"></div>
<div class="r" style="left:1135.2px;top:172px;width:0.98px;height:1.5px;background:#ce9178;opacity:0.42"></div>
<div class="r" style="left:1136.18px;top:172px;width:0.98px;height:1.5px;background:#179fff;opacity:0.25"></div>
<div class="r" style="left:1137.16px;top:172px;width:0.98px;height:1.5px;background:#d4d4d4;opacity:0.42"></div>
<div class="r" style="left:1086.2px;top:174px;width:0.98px;height:1.5px;background:#da70d6;opacity:0.25"></div>
<div class="r" style="left:1087.18px;top:174px;width:0.98px;height:1.5px;background:#ffd700;opacity:0.25"></div>
<div class="r" style="left:1088.16px;top:174px;width:0.98px;height:1.5px;background:#d4d4d4;opacity:0.42"></div>
<div class="r" style="left:1170px;top:92px;width:13px;height:543px;background:#1f1f1f;"></div>
<div class="r" style="left:1170px;top:92px;width:1px;height:543px;background:#141414;"></div>
<div class="r" style="left:1170px;top:92px;width:13px;height:1px;background:#141414;"></div>
<div class="r" style="left:1170px;top:213px;width:13px;height:219px;background:#434343;"></div>
<div class="r" style="left:1170px;top:414px;width:13px;height:2px;background:#a0a0a0;"></div>
<span class="t s" style="left:385.2px;top:646.5px;line-height:15px;font-size:11px;color:#9d9d9d;letter-spacing:-1.047px;">PROBLEMS</span>
<span class="t s" style="left:463.3px;top:646.5px;line-height:15px;font-size:11px;color:#9d9d9d;letter-spacing:-1.004px;">OUTPUT</span>
<span class="t s" style="left:528.2px;top:646.5px;line-height:15px;font-size:11px;color:#e7e7e7;letter-spacing:-0.889px;">DEBUG CONSOLE</span>
<div class="r" style="left:526px;top:665px;width:89px;height:1px;background:#2b7ad6;"></div>
<span class="t s" style="left:638.0px;top:646.5px;line-height:15px;font-size:11px;color:#9d9d9d;letter-spacing:-0.703px;">TERMINAL</span>
<span class="t s" style="left:713.3px;top:646.5px;line-height:15px;font-size:11px;color:#9d9d9d;letter-spacing:-1.549px;">PORTS</span>
<div class="r" style="left:755px;top:645px;width:18px;height:18px;background:#616161;border-radius:9px"></div>
<span class="t s" style="left:761.2px;top:646.7px;line-height:15px;font-size:11px;color:#ffffff;">5</span>
<div class="r" style="left:788px;top:642px;width:306px;height:24px;background:#313131;border-radius:2px"></div>
<span class="t s" style="left:795.0px;top:645.8px;line-height:18px;font-size:13px;color:#8f8f8f;letter-spacing:-0.557px;">Filter (e.g. text, !exclude)</span>
<svg class="r" style="left:1101px;top:647px;" width="17" height="14" viewBox="0 0 17 14" fill="none"><path d="M.4 2.500h15.400M.4 5.500h15.400M.4 8.500h8.900M.4 11.500h8.900" stroke="#cccccc" stroke-width="1"/><path d="M10.700 7.700l4.400 4.400M15.100 7.700l-4.400 4.400" stroke="#cccccc" stroke-width="1.100"/></svg>
<svg class="r" style="left:1129px;top:648px;" width="13" height="9" viewBox="0 0 13 9" fill="none"><path d="M1 7.200 6.200 2l5.200 5.200" stroke="#cccccc" stroke-width="1.100"/></svg>
<svg class="r" style="left:1155px;top:647px;" width="13" height="13" viewBox="0 0 13 13" fill="none"><path d="M1.300 1.500l9.600 9.200M10.900 1.500 1.300 10.700" stroke="#cccccc" stroke-width="1.100"/></svg>
<span class="t m" style="left:395.300px;top:671.0px;line-height:19px;font-size:12.83px;color:#cca700">/usr/bin/npm run-script debug-watch</span>
<span class="t m" style="left:395.300px;top:711.0px;line-height:19px;font-size:12.83px;color:#3794ff">&gt; basic-app@1.0.0 debug-watch</span>
<span class="t m" style="left:395.300px;top:730.0px;line-height:19px;font-size:12.83px;color:#3794ff">&gt; nodemon --watch ./ --exec npm run debug</span>
<span class="t m" style="left:395.300px;top:769.0px;line-height:19px;font-size:12.83px;color:#e5e510">[nodemon] 3.0.2</span>
<span class="t m" style="left:395.300px;top:788.5px;line-height:19px;font-size:12.83px;color:#e5e510">[nodemon] to restart at any time, enter `rs`</span>
<span class="t m" style="left:395.300px;top:808.5px;line-height:19px;font-size:12.83px;color:#e5e510">[nodemon] watching path(s): **/*</span>
<span class="t m" style="left:395.300px;top:828.5px;line-height:19px;font-size:12.83px;color:#e5e510">[nodemon] watching extensions: js,mjs,cjs,json</span>
<span class="t m" style="left:395.300px;top:848.5px;line-height:19px;font-size:12.83px;color:#0dbc79">[nodemon] starting `npm run debug`</span>
<span class="t m" style="left:395.300px;top:889.0px;line-height:19px;font-size:12.83px;color:#3794ff">&gt; basic-app@1.0.0 debug</span>
<span class="t m" style="left:395.300px;top:908.0px;line-height:19px;font-size:12.83px;color:#3794ff">&gt; node --inspect index.js</span>
<span class="t m" style="left:395.300px;top:947.0px;line-height:19px;font-size:12.83px;color:#3794ff">Server is running in port - 9000</span>
<span class="t m" style="right:8.200px;top:691.0px;line-height:19px;font-size:12.83px;color:#cccccc;text-decoration:underline;text-underline-offset:1px">run-script-pkg.js:64</span>
<span class="t m" style="right:8.200px;top:769.0px;line-height:19px;font-size:12.83px;color:#cccccc;text-decoration:underline;text-underline-offset:1px">log.js:34</span>
<span class="t m" style="right:8.200px;top:788.5px;line-height:19px;font-size:12.83px;color:#cccccc;text-decoration:underline;text-underline-offset:1px">log.js:34</span>
<span class="t m" style="right:8.200px;top:808.5px;line-height:19px;font-size:12.83px;color:#cccccc;text-decoration:underline;text-underline-offset:1px">log.js:34</span>
<span class="t m" style="right:8.200px;top:828.5px;line-height:19px;font-size:12.83px;color:#cccccc;text-decoration:underline;text-underline-offset:1px">log.js:34</span>
<span class="t m" style="right:8.200px;top:848.5px;line-height:19px;font-size:12.83px;color:#cccccc;text-decoration:underline;text-underline-offset:1px">log.js:34</span>
<span class="t m" style="right:8.200px;top:869.0px;line-height:19px;font-size:12.83px;color:#cccccc;text-decoration:underline;text-underline-offset:1px">run-script-pkg.js:64</span>
<span class="t m" style="right:8.200px;top:947.0px;line-height:19px;font-size:12.83px;color:#cccccc;text-decoration:underline;text-underline-offset:1px">index.js:41</span>
<div class="r" style="left:379px;top:934px;width:290px;height:43px;background:transparent;border:2px solid #ff2a00;box-sizing:border-box"></div>
<div class="r" style="left:365px;top:990px;width:818px;height:1px;background:#3c3c3c;"></div>
<svg class="r" style="left:376px;top:995px;" width="9" height="12" viewBox="0 0 9 12" fill="none"><path d="M1.500 1 7 6l-5.500 5" stroke="#cccccc" stroke-width="1.500"/></svg>
<svg class="r" style="left:12px;top:1015px;" width="11" height="12" viewBox="0 0 11 12" fill="none"><path d="M.800 3.200 5.200 7.300.800 11.400M9.600.200 5.800 4l3.800 3.800" stroke="#ffffff" stroke-width="1.100"/></svg>
<span class="t s" style="left:27.4px;top:1013.5px;line-height:17px;font-size:12px;color:#ffffff;letter-spacing:-0.277px;">WSL: Ubuntu</span>
<svg class="r" style="left:112px;top:1013px;" width="14" height="16" viewBox="0 0 14 16" fill="none"><circle cx="4.200" cy="3" r="1.900" stroke="#fff" stroke-width="1.100"/><circle cx="4.200" cy="12.700" r="1.900" stroke="#fff" stroke-width="1.100"/><circle cx="10.700" cy="5.800" r="1.800" stroke="#fff" stroke-width="1.100"/><path d="M4.200 4.900v5.900M10.700 7.600c0 2.600-6.500 1.400-6.500 3.500" stroke="#fff" stroke-width="1.100"/></svg>
<span class="t s" style="left:129.9px;top:1013.5px;line-height:17px;font-size:12px;color:#ffffff;letter-spacing:0.005px;">main*</span>
<svg class="r" style="left:166.4px;top:1013.8px;" width="14" height="14" viewBox="0 0 14 14" fill="none"><path d="M2.100 6.300A5 5 0 0 1 11.500 4.900M11.900 7.700A5 5 0 0 1 2.500 9.100" stroke="#fff" stroke-width="1.200"/><path d="M9.200 4.300h5l-2.500 3.500zM-.200 9.700h5L2.300 6.200z" fill="#fff"/></svg>
<svg class="r" style="left:195px;top:1014.5px;" width="13" height="13" viewBox="0 0 13 13" fill="none"><circle cx="6.500" cy="6.500" r="5.700" stroke="#fff" stroke-width="1.100"/><path d="M4.200 4.200l4.600 4.600M8.800 4.200 4.200 8.800" stroke="#fff" stroke-width="1.100"/></svg>
<span class="t s" style="left:212.3px;top:1013.5px;line-height:17px;font-size:12px;color:#ffffff;">0</span>
<svg class="r" style="left:223px;top:1014.5px;" width="13" height="13" viewBox="0 0 13 13" fill="none"><path d="M6.500 1.200 12.200 11.800H.8z" stroke="#fff" stroke-width="1.100" stroke-linejoin="round"/><path d="M6.500 5v3.500M6.500 9.600v1.200" stroke="#fff" stroke-width="1.100"/></svg>
<span class="t s" style="left:239.4px;top:1013.5px;line-height:17px;font-size:12px;color:#ffffff;">0</span>
<svg class="r" style="left:263px;top:1014px;" width="13" height="14" viewBox="0 0 13 14" fill="none"><path d="M6.500 5.500 3.500 13M6.500 5.500 9.500 13M4.700 10h3.600" stroke="#fff" stroke-width="1.100"/><circle cx="6.500" cy="4.800" r="1.100" fill="#fff"/><path d="M3.800 2.300a3.800 3.800 0 0 0 0 5M9.200 2.300a3.800 3.800 0 0 1 0 5M1.800.8a6 6 0 0 0 0 8M11.200.8a6 6 0 0 1 0 8" stroke="#fff" stroke-width="1"/></svg>
<span class="t s" style="left:279.5px;top:1013.5px;line-height:17px;font-size:12px;color:#ffffff;">5</span>
<svg class="r" style="left:301px;top:1014px;" width="15" height="15" viewBox="0 0 15 15" fill="none"><path d="M4.300 6.500V1.900L13.300 7.200 9 9.800" stroke="#fff" stroke-width="1.150"/><ellipse cx="4.300" cy="10.300" rx="2.100" ry="2.800" stroke="#fff" stroke-width="1"/><path d="M.500 10.300h1.700M6.400 10.300h1.700M1 7.500l1.600 1.300M7.600 7.500 6 8.800M1 13.300l1.600-1.300M7.600 13.300 6 12" stroke="#fff" stroke-width=".9"/></svg>
<span class="t s" style="left:319.3px;top:1013.5px;line-height:17px;font-size:12px;color:#ffffff;letter-spacing:-0.078px;">Debug Watch (basic-app)</span>
<span class="t s" style="left:838.6px;top:1013.5px;line-height:17px;font-size:12px;color:#ffffff;letter-spacing:-0.365px;">Ln 43, Col 1</span>
<span class="t s" style="left:916.1px;top:1013.5px;line-height:17px;font-size:12px;color:#ffffff;letter-spacing:-0.596px;">Spaces: 2</span>
<span class="t s" style="left:981.2px;top:1013.5px;line-height:17px;font-size:12px;color:#ffffff;letter-spacing:-0.624px;">UTF-8</span>
<span class="t s" style="left:1028.6px;top:1013.5px;line-height:17px;font-size:12px;color:#ffffff;letter-spacing:-1.745px;">CRLF</span>
<span class="t s" style="left:1070.3px;top:1013.5px;line-height:16px;font-size:11.5px;color:#ffffff;font-weight:bold;letter-spacing:2.749px;">{}</span>
<span class="t s" style="left:1089.0px;top:1013.5px;line-height:17px;font-size:12px;color:#ffffff;letter-spacing:-0.425px;">JavaScript</span>
<svg class="r" style="left:1155.5px;top:1014px;" width="13" height="14" viewBox="0 0 13 14" fill="none"><path d="M6.500 1.200c-2.500 0-4 1.800-4 4.200v3.400L1.200 11h10.600l-1.300-2.200V5.400c0-2.400-1.500-4.200-4-4.200z" stroke="#fff" stroke-width="1.100" stroke-linejoin="round"/><path d="M5 11.500a1.500 1.500 0 0 0 3 0" stroke="#fff" stroke-width="1.100"/></svg>
<div class="r" style="left:0px;top:0px;width:1184px;height:1px;background:#858585;"></div>
<div class="r" style="left:0px;top:0px;width:1px;height:1032px;background:#6f6f6f;"></div>
<div class="r" style="left:1183px;top:0px;width:1px;height:1032px;background:#6b6b6b;"></div>
<div class="r" style="left:0px;top:1031px;width:1184px;height:1px;background:#7d7870;"></div>
</div></body></html>
